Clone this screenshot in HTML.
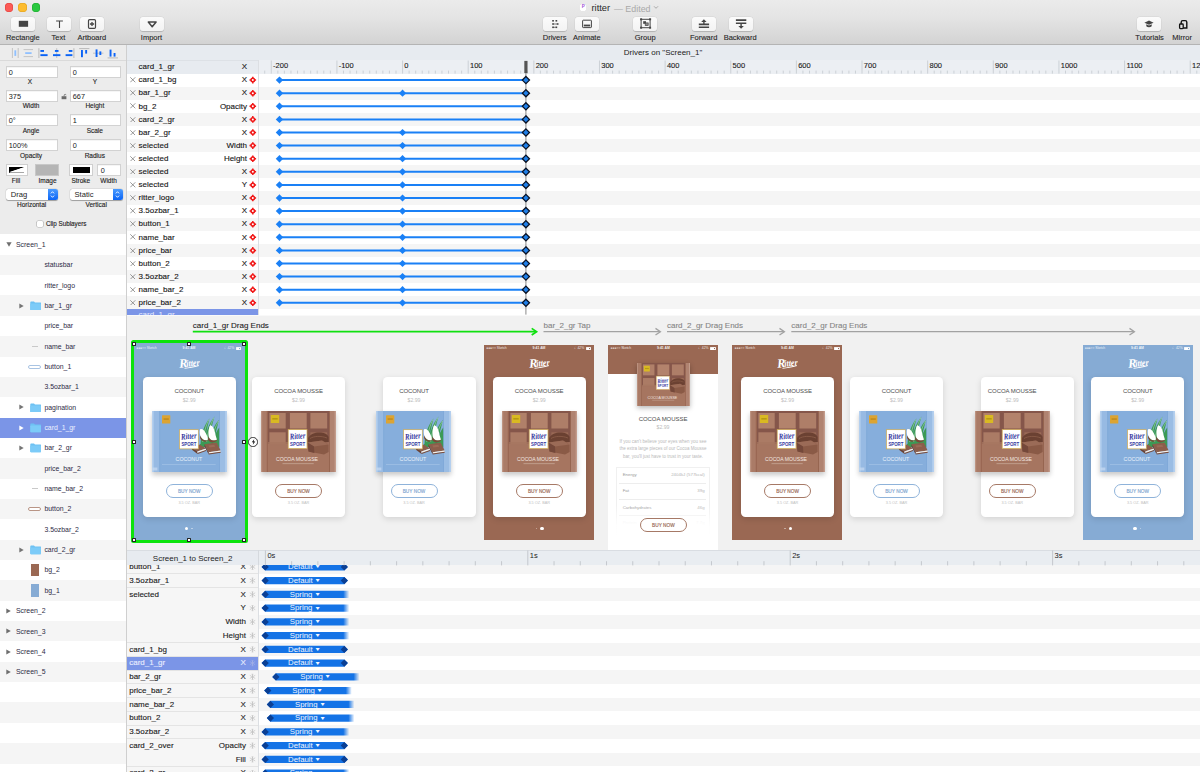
<!DOCTYPE html><html><head><meta charset="utf-8"><title>ritter</title><style>
*{box-sizing:border-box;margin:0;padding:0}
html,body{width:1200px;height:772px;overflow:hidden;background:#f1f1f1;font-family:"Liberation Sans",sans-serif;color:#222}
.a{position:absolute}
.t{position:absolute;white-space:nowrap;line-height:1}
.c{transform:translate(-50%,-50%)}
.r{transform:translate(-100%,-50%)}
.l{transform:translate(0,-50%)}
#tb{left:0;top:0;width:1200px;height:45px;background:linear-gradient(#ebebeb,#e4e4e4 40%,#d3d3d3);border-bottom:1px solid #b4b4b4}
.btn{position:absolute;top:17px;height:14px;width:24px;border-radius:3px;background:linear-gradient(#fbfbfb,#f3f3f3);box-shadow:0 .5px .8px rgba(0,0,0,.16),0 0 0 .4px rgba(0,0,0,.05)}
.btn svg{position:absolute;left:0;top:0;width:24px;height:14px}
.tl{font-size:7.5px;color:#262626;top:37.5px;-webkit-text-stroke:.1px #262626}
#lp{left:0;top:45px;width:127px;height:727px;background:#ececec;border-right:1px solid #cfcfcf}
.inp{position:absolute;height:12px;background:#fff;border:1px solid #d2d2d2;box-shadow:inset 0 .5px .5px rgba(0,0,0,.08);font-size:7.3px;line-height:11.4px;padding-left:2.3px;color:#222}
.lb{font-size:6.5px;color:#222;-webkit-text-stroke:.12px #222}
._dd{}.dd{position:absolute;height:11px;background:#fff;border-radius:2.5px;box-shadow:0 .4px .8px rgba(0,0,0,.3),0 0 0 .4px rgba(0,0,0,.08);font-size:7.6px;line-height:11.2px;padding-left:5px;color:#222}
.dd i{position:absolute;right:0;top:0;width:9.5px;height:11px;border-radius:0 2.5px 2.5px 0;background:linear-gradient(#4a9bff,#0b64f5)}
.lr{position:absolute;left:0;width:126px;height:20.4px}
._lt{}.lt{font-size:6.9px;color:#2d2b45}
.row{position:absolute;left:127px;width:1073px}
.dn{font-size:8px;color:#161616;-webkit-text-stroke:.12px #161616}
</style></head><body>
<svg width="0" height="0" style="position:absolute"><defs>
<linearGradient id="gfl" x1="0" x2="1"><stop offset="0" stop-color="#a9c6e8"/><stop offset="1" stop-color="#8bb1de"/></linearGradient>
<linearGradient id="gbr" x1="0" x2="0" y1="0" y2="1"><stop offset="0" stop-color="#a97763"/><stop offset="1" stop-color="#99644f"/></linearGradient>
<symbol id="coco" viewBox="0 0 75 61">
 <rect x="0" y="0" width="75" height="61" fill="#86aedc"/>
 <rect x="0" y="0" width="8" height="61" fill="#97bae3"/>
 <rect x="0" y="0" width="1.6" height="61" fill="#b4cfee"/>
 <rect x="7.2" y="0" width="1" height="61" fill="#7ea8d8"/>
 <rect x="67.4" y="0" width="7.6" height="61" fill="#9bbde4"/>
 <rect x="73.2" y="0" width="1.8" height="61" fill="#b4cfee"/>
 <rect x="67" y="0" width=".9" height="61" fill="#7ea8d8"/>
 <g fill="#3b9a55">
  <path d="M48.5 33 C49 24 52 14 57.5 7.5 C55.5 15 53.5 24 53 33 Z"/>
  <path d="M52 33 C53 23 57 12 62.5 5.5 C60 14 57.5 24 57 33 Z"/>
  <path d="M56 33 C58 24 62 14 67 9 C65 17 62.5 25 61.5 33 Z"/>
  <path d="M59.5 33 C61.5 27 64.5 20 67.2 16.5 L67.2 33 Z"/>
  <path d="M48 33 H67.2 V36 H48 Z"/>
 </g>
 <g stroke="#d8efe0" stroke-width=".45" fill="none"><path d="M50.8 31 C51.5 23 54 14 57 8.5"/><path d="M54.6 31 C55.6 22 58.8 12.5 62 6.5"/><path d="M58.9 31 C60.4 23.5 63.4 15.5 66.6 10"/></g>
 <path d="M48.2 18.2 C50.2 17.2 52.5 19.5 54 22.5 C55.3 25.2 56.3 27.6 55.6 28.9 C53 30.2 49.6 28.2 48.4 25 C47.6 22.6 47.5 19.6 48.2 18.2 Z" fill="#fff"/>
 <path d="M48 24.5 C49.5 28.5 53 30.6 56 29 C55 31.5 50 31.5 48 27 Z" fill="#7a4b38"/>
 <path d="M58.3 14.2 C60.6 14.2 62.3 18 63 21.6 C63.7 25 64.6 27.6 65 28.9 C62 30.4 57.4 29.6 56.8 26 C56.3 22 56.6 16 58.3 14.2 Z" fill="#fff"/>
 <path d="M56.6 25.5 C57.5 29 61.5 30.6 65.2 28.6 C65.4 31 58 33.6 56 28.6 Z" fill="#7a4b38"/>
 <rect x="10" y="4.2" width="8.3" height="8.4" rx=".6" fill="#dca433"/>
 <rect x="11.6" y="7.3" width="5.2" height="1.5" fill="#c08a1c"/>
 <path d="M39.8 36.4 L47.8 33.4 L53.9 37.6 L45.4 40.6 Z" fill="#8c5e4b"/><path d="M39.8 36.4 L45.4 40.6 L45.6 43 L40 38.8 Z" fill="#6b4131"/><path d="M45.4 40.6 L53.9 37.6 L54 38.9 L45.5 41.9 Z" fill="#f5f0ea"/><path d="M45.5 41.9 L54 38.9 L54 40 L45.6 43 Z" fill="#7a4b38"/>
 <path d="M52.4 33.2 L64.6 31.6 L68.6 39.4 L56.6 41.2 Z" fill="#8c5e4b"/><path d="M56.3 34.6 L62.2 33.8 L63.2 35.8 L57.3 36.6 Z" fill="#9a6b57"/><path d="M56.6 41.2 L68.6 39.4 L68.7 40.8 L56.7 42.6 Z" fill="#f5f0ea"/><path d="M56.7 42.6 L68.7 40.8 L68.7 41.8 L56.8 43.6 Z" fill="#7a4b38"/><path d="M52.4 33.2 L56.6 41.2 L56.8 43.6 L52.5 35.4 Z" fill="#6b4131"/>
 <rect x="27.5" y="18.7" width="18.8" height="19.2" fill="#fff" stroke="#cfa94f" stroke-width=".7"/>
 <text x="36.9" y="28" font-family="Liberation Serif" font-style="italic" font-weight="bold" font-size="8.6" fill="#3437a0" text-anchor="middle" textLength="15.6" lengthAdjust="spacingAndGlyphs" transform="rotate(-5 36.9 26)">Ritter</text>
 <text x="36.9" y="34.6" font-family="Liberation Sans" font-weight="bold" font-size="5.4" fill="#3437a0" text-anchor="middle" textLength="15" lengthAdjust="spacingAndGlyphs">SPORT</text>
 <text x="36.9" y="50.4" font-family="Liberation Sans" font-size="5.4" fill="#eaf2fb" text-anchor="middle" textLength="26.6" lengthAdjust="spacingAndGlyphs">COCONUT</text>
 <rect x="10" y="53" width="53.7" height=".8" fill="#9fc0e5"/>
 <rect x=".4" y="56.5" width="5" height="3" fill="#c7dbf2" opacity=".7"/>
</symbol>
<symbol id="cocoa" viewBox="0 0 75 61">
 <rect x="0" y="0" width="75" height="61" fill="#a67560"/>
 <rect x="6.5" y="0" width="62" height="33" fill="#85564a"/>
 <rect x="8.4" y="2" width="16.3" height="15.5" fill="#b08069"/>
 <rect x="28.9" y="2" width="16.8" height="15.5" fill="#b3836c"/>
 <rect x="49.4" y="2" width="16.8" height="15.5" fill="#ae7e68"/>
 <rect x="8.4" y="21.3" width="16.3" height="12" fill="#ab7b65"/>
 <rect x="49.4" y="21.3" width="16.8" height="12" fill="#9a6a56"/>
 <rect x="6.5" y="31" width="62" height="3.5" fill="#a67560" opacity=".75"/>
 <rect x="0" y="0" width="6.5" height="61" fill="#aa7b67"/>
 <rect x="0" y="0" width="1.2" height="61" fill="#bd9482"/>
 <rect x="5.8" y="0" width=".9" height="61" fill="#94624e"/>
 <rect x="68.5" y="0" width="6.5" height="61" fill="#b08371"/>
 <rect x="73.6" y="0" width="1.4" height="61" fill="#c39c8c"/>
 <rect x="68.1" y="0" width=".9" height="61" fill="#94624e"/>
 <path d="M47 27 C50 22.5 55 21 60 21.6 C64 22 67 24 67.6 26 L67.6 31 L47 33 Z" fill="#6b4132"/>
 <path d="M49 27.5 C53 25 60 24.6 66 27" stroke="#8d5e4a" stroke-width=".8" fill="none"/>
 <path d="M46.5 31.5 L61 29.5 L67.6 33.5 L67.6 41 L63 43.6 L47.5 40.5 Z" fill="#8a5a46"/>
 <path d="M46.5 31.5 L61 29.5 L67.6 33.5 L53 35.4 Z" fill="#9b6b57"/>
 <path d="M46.5 31.5 L53 35.4 L53.4 42 L47.5 40.5 Z" fill="#74483a"/>
 <rect x="9.8" y="4" width="8.4" height="8" rx=".6" fill="#d9b922"/>
 <rect x="11.3" y="7" width="5.4" height="1.6" fill="#b79a14"/>
 <rect x="27.2" y="18.6" width="18.8" height="19" fill="#fff" stroke="#cfa94f" stroke-width=".7"/>
 <text x="36.6" y="27.9" font-family="Liberation Serif" font-style="italic" font-weight="bold" font-size="8.6" fill="#3437a0" text-anchor="middle" textLength="15.6" lengthAdjust="spacingAndGlyphs" transform="rotate(-5 36.6 26)">Ritter</text>
 <text x="36.6" y="34.5" font-family="Liberation Sans" font-weight="bold" font-size="5.4" fill="#3437a0" text-anchor="middle" textLength="15" lengthAdjust="spacingAndGlyphs">SPORT</text>
 <text x="36" y="50.4" font-family="Liberation Sans" font-size="5.4" fill="#f3e8e2" text-anchor="middle" textLength="42" lengthAdjust="spacingAndGlyphs">COCOA MOUSSE</text>
 <rect x="21.5" y="52.3" width="31.2" height=".8" fill="#c6a595"/>
</symbol>
<symbol id="rlogo" viewBox="0 0 22 12">
 <g transform="rotate(-5 11 6)"><text x="1" y="10" font-family="Liberation Serif" font-style="italic" font-weight="bold" fill="#fff"><tspan font-size="12.5">R</tspan><tspan font-size="9.4" dx="-1.2" dy="-.6" textLength="13.4" lengthAdjust="spacingAndGlyphs">itter</tspan></text></g>
 <path d="M6.5 11 C11 10.6 16 9.4 21 8.3 L21 9.1 C16 10.4 11 11.5 6.5 11.8 Z" fill="#fff"/>
</symbol>
</defs></svg>
<div id="tb" class="a">
<div class="a" style="left:5.1px;top:3.4px;width:8.2px;height:8.2px;border-radius:50%;background:#fc5b57;box-shadow:inset 0 0 0 .5px #df3d38"></div>
<div class="a" style="left:18.4px;top:3.4px;width:8.2px;height:8.2px;border-radius:50%;background:#fdbc2e;box-shadow:inset 0 0 0 .5px #de9f1a"></div>
<div class="a" style="left:31.699999999999996px;top:3.4px;width:8.2px;height:8.2px;border-radius:50%;background:#29c83f;box-shadow:inset 0 0 0 .5px #1aa82c"></div>
<div class="a" style="left:580.3px;top:4.2px;width:6.2px;height:7.2px;background:#fff;border-radius:.8px;box-shadow:0 0 .6px rgba(0,0,0,.5)"></div>
<div class="t" style="left:581.7px;top:5.3px;font-size:4.5px;font-weight:bold;color:#a04fd6">P</div>
<div class="t l" style="left:591.5px;top:9.1px;font-size:9.3px;color:#2a2a2a">ritter</div>
<div class="t l" style="left:614px;top:9.1px;font-size:8.9px;color:#a9a9a9">— Edited</div>
<svg class="a" style="left:653px;top:4.8px" width="6" height="5" viewBox="0 0 6 5"><path d="M1 1.3 L3 3.3 L5 1.3" fill="none" stroke="#a9a9a9" stroke-width="1"/></svg>
<div class="btn" style="left:11px"><svg viewBox="0 0 24 14"><rect x="7.8" y="3.8" width="9.3" height="6" fill="#454545"/></svg></div>
<div class="t c tl" style="left:22.8px">Rectangle</div>
<div class="btn" style="left:46.5px"><svg viewBox="0 0 24 14"><path d="M9.1 3.4 H15.9 V4.5 H13.05 V11 H11.95 V4.5 H9.1 Z" fill="#454545"/></svg></div>
<div class="t c tl" style="left:58.5px">Text</div>
<div class="btn" style="left:80.2px"><svg viewBox="0 0 24 14"><rect x="8.5" y="2.6" width="7" height="8.8" rx="1.1" fill="none" stroke="#454545" stroke-width="1.2"/><path d="M12 4.9 V9.1 M9.9 7 H14.1" stroke="#454545" stroke-width="1.3"/></svg></div>
<div class="t c tl" style="left:91.8px">Artboard</div>
<div class="btn" style="left:139.7px"><svg viewBox="0 0 24 14"><path d="M8.3 5 H16.1 L12.2 9.8 Z" fill="none" stroke="#454545" stroke-width="1.5" stroke-linejoin="round"/></svg></div>
<div class="t c tl" style="left:151.5px">Import</div>
<div class="btn" style="left:542.8px"><svg viewBox="0 0 24 14"><rect x="9.2" y="3" width="1.7" height="1.6" fill="#454545"/><rect x="9.2" y="6.2" width="1.7" height="1.6" fill="#454545"/><rect x="9.2" y="9.5" width="1.7" height="1.6" fill="#454545"/><rect x="12.5" y="3" width="1.7" height="1.6" fill="#454545"/><rect x="13.8" y="6.2" width="1.7" height="1.6" fill="#454545"/><rect x="12.5" y="9.5" width="1.7" height="1.6" fill="#454545"/><path d="M10.5 7 H14 M10.5 10.3 H12.6" stroke="#454545" stroke-width=".7"/></svg></div>
<div class="t c tl" style="left:554.6px">Drivers</div>
<div class="btn" style="left:574.8px"><svg viewBox="0 0 24 14"><rect x="7.6" y="3.2" width="8.8" height="7.4" rx=".6" fill="none" stroke="#454545" stroke-width="1"/><rect x="8.8" y="7.6" width="6.4" height="1.8" fill="#454545"/></svg></div>
<div class="t c tl" style="left:586.8px">Animate</div>
<div class="btn" style="left:633.1px"><svg viewBox="0 0 24 14"><rect x="8.1" y="2.3" width="9" height="8.4" fill="none" stroke="#454545" stroke-width="1"/><rect x="7.1" y="1.3" width="2" height="2" fill="#454545"/><rect x="16.1" y="1.3" width="2" height="2" fill="#454545"/><rect x="7.1" y="9.7" width="2" height="2" fill="#454545"/><rect x="16.1" y="9.7" width="2" height="2" fill="#454545"/><rect x="10.2" y="4.2" width="2.8" height="2.6" fill="#454545"/><rect x="12.2" y="5.9" width="3" height="2.7" fill="#8a8a8a" stroke="#454545" stroke-width=".7"/></svg></div>
<div class="t c tl" style="left:645.2px">Group</div>
<div class="btn" style="left:692.2px"><svg viewBox="0 0 24 14"><path d="M11.9 2.3 L14.6 5.1 H9.2 Z" fill="#454545"/><path d="M11.9 4.9 V7.6" stroke="#454545" stroke-width="1.4"/><path d="M6.8 7.4 H17.1 M6.8 10.3 H17.1" stroke="#454545" stroke-width="1.6"/></svg></div>
<div class="t c tl" style="left:703.7px">Forward</div>
<div class="btn" style="left:728.6px"><svg viewBox="0 0 24 14"><path d="M6.9 3.1 H17.3 M6.9 6.2 H17.3" stroke="#454545" stroke-width="1.6"/><path d="M12.1 6.4 V9.4" stroke="#454545" stroke-width="1.4"/><path d="M12.1 11.8 L14.8 9 H9.4 Z" fill="#454545"/></svg></div>
<div class="t c tl" style="left:740.1px">Backward</div>
<div class="btn" style="left:1137.1px"><svg viewBox="0 0 24 14"><path d="M12 3.6 L16.6 5.7 L12 7.8 L7.4 5.7 Z" fill="#454545"/><path d="M9.3 7.2 V9.2 C10.6 10.6 13.4 10.6 14.7 9.2 V7.2 L12 8.5 Z" fill="#454545"/></svg></div>
<div class="t c tl" style="left:1149.6px">Tutorials</div>
<div class="a" style="left:1170.6px;top:17px;width:24px;height:14px"><svg width="24" height="14" viewBox="0 0 24 14"><path d="M10.2 11 V5.2 C10.2 4.2 10.8 3.6 11.8 3.6 H14.2 C15.2 3.6 15.8 4.2 15.8 5.2 V11 Z" fill="none" stroke="#111" stroke-width="1.4"/><rect x="8.6" y="7" width="3.6" height="4.6" rx=".8" fill="#e0e0e0" stroke="#111" stroke-width="1.3"/></svg></div>
<div class="t c tl" style="left:1182.1px">Mirror</div>
</div>
<div id="lp" class="a"></div>
<div class="a" style="left:0;top:60px;width:126px;height:1px;background:#dadada"></div>
<svg class="a" style="left:0;top:0" width="127" height="62" viewBox="0 0 127 62"><path d="M12.4 48 V58 M18.2 48 V58" stroke="#b9b9b9" stroke-width=".8"/><rect x="14.4" y="50.3" width="1.8" height="5.6" fill="#8fc0ff"/><path d="M23.6 49.6 H33 M23.6 56.6 H33" stroke="#b9b9b9" stroke-width=".8"/><rect x="25.2" y="52.2" width="6.4" height="1.8" fill="#8fc0ff"/><path d="M38.9 48.2 V58" stroke="#b9b9b9" stroke-width="1"/><rect x="40.4" y="50" width="3.6" height="1.9" fill="#0b63f6"/><rect x="40.4" y="54.2" width="7.2" height="1.9" fill="#0b63f6"/><path d="M56.7 48.2 V58" stroke="#b9b9b9" stroke-width=".8"/><rect x="54.9" y="50" width="3.6" height="1.9" fill="#0b63f6"/><rect x="53" y="54.2" width="7.4" height="1.9" fill="#0b63f6"/><path d="M73.9 48.2 V58" stroke="#b9b9b9" stroke-width="1"/><rect x="68.8" y="50" width="3.6" height="1.9" fill="#0b63f6"/><rect x="65.6" y="54.2" width="6.8" height="1.9" fill="#0b63f6"/><path d="M79.2 48.6 H89.4" stroke="#b9b9b9" stroke-width="1"/><rect x="81" y="50" width="1.9" height="7.2" fill="#0b63f6"/><rect x="85.2" y="50" width="1.9" height="3.6" fill="#0b63f6"/><path d="M93 53.2 H103.4" stroke="#b9b9b9" stroke-width=".8"/><rect x="95.6" y="49.4" width="1.9" height="7.6" fill="#0b63f6"/><rect x="99.4" y="51.4" width="1.9" height="3.6" fill="#0b63f6"/><path d="M107.6 57.9 H118" stroke="#b9b9b9" stroke-width="1"/><rect x="109.6" y="49.6" width="1.9" height="7" fill="#0b63f6"/><rect x="113.6" y="53" width="1.9" height="3.6" fill="#0b63f6"/></svg>
<div class="inp" style="left:5.5px;top:66px;width:52px">0</div>
<div class="inp" style="left:69.5px;top:66px;width:51.5px">0</div>
<div class="t c lb" style="left:29.8px;top:82.3px">X</div>
<div class="t c lb" style="left:94.8px;top:82.3px">Y</div>
<div class="inp" style="left:5.5px;top:89.8px;width:52px">375</div>
<div class="inp" style="left:69.5px;top:89.8px;width:51.5px">667</div>
<div class="t c lb" style="left:31px;top:106px">Width</div>
<div class="t c lb" style="left:94.8px;top:106px">Height</div>
<div class="inp" style="left:5.5px;top:114.4px;width:52px">0°</div>
<div class="inp" style="left:69.5px;top:114.4px;width:51.5px">1</div>
<div class="t c lb" style="left:31px;top:130.8px">Angle</div>
<div class="t c lb" style="left:94.8px;top:130.8px">Scale</div>
<div class="inp" style="left:5.5px;top:139.2px;width:52px">100%</div>
<div class="inp" style="left:69.5px;top:139.2px;width:51.5px">0</div>
<div class="t c lb" style="left:31px;top:156px">Opacity</div>
<div class="t c lb" style="left:94.8px;top:156px">Radius</div>
<svg class="a" style="left:60.5px;top:92.5px" width="6" height="7" viewBox="0 0 6 7"><rect x=".6" y="3.2" width="4.8" height="3" fill="#6b6b6b"/><path d="M3.2 3.2 V2.2 C3.2 1 5 1 5 2.2" fill="none" stroke="#6b6b6b" stroke-width=".8"/></svg>
<div class="a" style="left:5.5px;top:164px;width:22.3px;height:12px;background:#fff;border:1px solid #cfcfcf"></div>
<svg class="a" style="left:9.2px;top:167.4px" width="15" height="5.4" viewBox="0 0 15 5.4"><rect x="0" y="0" width="15" height="5.4" fill="#fff" stroke="#222" stroke-width=".8"/><path d="M0 0 H2 L15 0 L0 5.4 Z" fill="#000" transform="scale(1,1)"/><path d="M0 5.4 L15 0 V5.4 Z" fill="#fff"/><path d="M0 0 L15 0 L0 5.4Z" fill="#000"/><path d="M.4 5 L14.6 .4 V5 Z" fill="#fff"/></svg>
<div class="a" style="left:35.3px;top:164px;width:23.7px;height:12px;background:#b5b5b5;border:1.5px solid #c8c8c8"></div>
<div class="a" style="left:69.2px;top:164px;width:23.5px;height:12px;background:#fff;border:1px solid #cfcfcf"></div>
<div class="a" style="left:73px;top:167.3px;width:16.5px;height:5.4px;background:#000"></div>
<div class="inp" style="left:97.4px;top:164px;width:23.2px">0</div>
<div class="t c lb" style="left:16px;top:181px">Fill</div>
<div class="t c lb" style="left:47.5px;top:181px">Image</div>
<div class="t c lb" style="left:80.8px;top:181px">Stroke</div>
<div class="t c lb" style="left:108.6px;top:181px">Width</div>
<div class="dd" style="left:5.7px;top:189.2px;width:52.3px">Drag<i></i></div>
<div class="dd" style="left:69.5px;top:189.2px;width:53.4px">Static<i></i></div>
<svg class="a" style="left:50.4px;top:190.4px" width="5" height="9" viewBox="0 0 5 9"><path d="M.9 3.4 L2.5 1.7 L4.1 3.4 M.9 5.6 L2.5 7.3 L4.1 5.6" fill="none" stroke="#fff" stroke-width=".9"/></svg>
<svg class="a" style="left:115.3px;top:190.4px" width="5" height="9" viewBox="0 0 5 9"><path d="M.9 3.4 L2.5 1.7 L4.1 3.4 M.9 5.6 L2.5 7.3 L4.1 5.6" fill="none" stroke="#fff" stroke-width=".9"/></svg>
<div class="t c lb" style="left:31.6px;top:205.3px">Horizontal</div>
<div class="t c lb" style="left:96.2px;top:205.3px">Vertical</div>
<div class="a" style="left:37.4px;top:221.1px;width:5.8px;height:5.8px;background:#fff;border-radius:1.2px;box-shadow:0 0 0 .6px #b0b0b0"></div>
<div class="t l lb" style="left:45.9px;top:224.3px;font-size:6.3px">Clip Sublayers</div>
<div class="lr" style="top:234.40px;background:#ffffff"></div>
<svg class="a" style="left:5.5px;top:241.98px" width="6" height="5" viewBox="0 0 6 5"><path d="M.4 .3 H5.6 L3 4.8 Z" fill="#6e6e6e"/></svg>
<div class="t l lt" style="left:16px;top:244.88px">Screen_1</div>
<div class="lr" style="top:254.75px;background:#f5f5f5"></div>
<div class="t l lt" style="left:44.4px;top:265.23px;color:#2d2b45">statusbar</div>
<div class="lr" style="top:275.10px;background:#ffffff"></div>
<div class="t l lt" style="left:44.4px;top:285.58px;color:#2d2b45">ritter_logo</div>
<div class="lr" style="top:295.45px;background:#f5f5f5"></div>
<svg class="a" style="left:19.4px;top:302.62px" width="5" height="6" viewBox="0 0 5 6"><path d="M.3 .4 V5.6 L4.7 3 Z" fill="#757575"/></svg>
<svg class="a" style="left:29.6px;top:300.82px" width="11.4" height="9.6" viewBox="0 0 11.4 9.6"><path d="M.3 1.2 C.3 .7 .6 .4 1.1 .4 H4 L5 1.5 H10.3 C10.8 1.5 11.1 1.8 11.1 2.3 V8.4 C11.1 8.9 10.8 9.2 10.3 9.2 H1.1 C.6 9.2 .3 8.9 .3 8.4 Z" fill="#6dc1f3"/><rect x=".3" y="2.6" width="10.8" height="6.6" rx=".7" fill="#7ccbf8"/></svg>
<div class="t l lt" style="left:44.4px;top:305.93px;color:#2d2b45">bar_1_gr</div>
<div class="lr" style="top:315.80px;background:#ffffff"></div>
<div class="t l lt" style="left:44.4px;top:326.28px;color:#2d2b45">price_bar</div>
<div class="lr" style="top:336.15px;background:#f5f5f5"></div>
<div class="a" style="left:32px;top:346.02px;width:6px;height:.8px;background:#c9c9c9"></div>
<div class="t l lt" style="left:44.4px;top:346.62px;color:#2d2b45">name_bar</div>
<div class="lr" style="top:356.50px;background:#ffffff"></div>
<div class="a" style="left:28.2px;top:364.57px;width:13.2px;height:4.2px;border-radius:2.1px;border:.8px solid #a9c4e3;background:#fff"></div>
<div class="t l lt" style="left:44.4px;top:366.98px;color:#2d2b45">button_1</div>
<div class="lr" style="top:376.85px;background:#f5f5f5"></div>
<div class="t l lt" style="left:44.4px;top:387.33px;color:#2d2b45">3.5ozbar_1</div>
<div class="lr" style="top:397.20px;background:#ffffff"></div>
<svg class="a" style="left:19.4px;top:404.38px" width="5" height="6" viewBox="0 0 5 6"><path d="M.3 .4 V5.6 L4.7 3 Z" fill="#757575"/></svg>
<svg class="a" style="left:29.6px;top:402.58px" width="11.4" height="9.6" viewBox="0 0 11.4 9.6"><path d="M.3 1.2 C.3 .7 .6 .4 1.1 .4 H4 L5 1.5 H10.3 C10.8 1.5 11.1 1.8 11.1 2.3 V8.4 C11.1 8.9 10.8 9.2 10.3 9.2 H1.1 C.6 9.2 .3 8.9 .3 8.4 Z" fill="#6dc1f3"/><rect x=".3" y="2.6" width="10.8" height="6.6" rx=".7" fill="#7ccbf8"/></svg>
<div class="t l lt" style="left:44.4px;top:407.68px;color:#2d2b45">pagination</div>
<div class="lr" style="top:417.55px;background:#7b95e7"></div>
<svg class="a" style="left:19.4px;top:424.73px" width="5" height="6" viewBox="0 0 5 6"><path d="M.3 .4 V5.6 L4.7 3 Z" fill="#fff"/></svg>
<svg class="a" style="left:29.6px;top:422.93px" width="11.4" height="9.6" viewBox="0 0 11.4 9.6"><path d="M.3 1.2 C.3 .7 .6 .4 1.1 .4 H4 L5 1.5 H10.3 C10.8 1.5 11.1 1.8 11.1 2.3 V8.4 C11.1 8.9 10.8 9.2 10.3 9.2 H1.1 C.6 9.2 .3 8.9 .3 8.4 Z" fill="#6dc1f3"/><rect x=".3" y="2.6" width="10.8" height="6.6" rx=".7" fill="#7ccbf8"/></svg>
<div class="t l lt" style="left:44.4px;top:428.03px;color:#eef1ff">card_1_gr</div>
<div class="lr" style="top:437.90px;background:#ffffff"></div>
<svg class="a" style="left:19.4px;top:445.07px" width="5" height="6" viewBox="0 0 5 6"><path d="M.3 .4 V5.6 L4.7 3 Z" fill="#757575"/></svg>
<svg class="a" style="left:29.6px;top:443.27px" width="11.4" height="9.6" viewBox="0 0 11.4 9.6"><path d="M.3 1.2 C.3 .7 .6 .4 1.1 .4 H4 L5 1.5 H10.3 C10.8 1.5 11.1 1.8 11.1 2.3 V8.4 C11.1 8.9 10.8 9.2 10.3 9.2 H1.1 C.6 9.2 .3 8.9 .3 8.4 Z" fill="#6dc1f3"/><rect x=".3" y="2.6" width="10.8" height="6.6" rx=".7" fill="#7ccbf8"/></svg>
<div class="t l lt" style="left:44.4px;top:448.38px;color:#2d2b45">bar_2_gr</div>
<div class="lr" style="top:458.25px;background:#f5f5f5"></div>
<div class="t l lt" style="left:44.4px;top:468.73px;color:#2d2b45">price_bar_2</div>
<div class="lr" style="top:478.60px;background:#ffffff"></div>
<div class="a" style="left:32px;top:488.48px;width:6px;height:.8px;background:#c9c9c9"></div>
<div class="t l lt" style="left:44.4px;top:489.08px;color:#2d2b45">name_bar_2</div>
<div class="lr" style="top:498.95px;background:#f5f5f5"></div>
<div class="a" style="left:28.2px;top:507.03px;width:13.2px;height:4.2px;border-radius:2.1px;border:.8px solid #b99586;background:#fff"></div>
<div class="t l lt" style="left:44.4px;top:509.43px;color:#2d2b45">button_2</div>
<div class="lr" style="top:519.30px;background:#ffffff"></div>
<div class="t l lt" style="left:44.4px;top:529.77px;color:#2d2b45">3.5ozbar_2</div>
<div class="lr" style="top:539.65px;background:#f5f5f5"></div>
<svg class="a" style="left:19.4px;top:546.82px" width="5" height="6" viewBox="0 0 5 6"><path d="M.3 .4 V5.6 L4.7 3 Z" fill="#757575"/></svg>
<svg class="a" style="left:29.6px;top:545.02px" width="11.4" height="9.6" viewBox="0 0 11.4 9.6"><path d="M.3 1.2 C.3 .7 .6 .4 1.1 .4 H4 L5 1.5 H10.3 C10.8 1.5 11.1 1.8 11.1 2.3 V8.4 C11.1 8.9 10.8 9.2 10.3 9.2 H1.1 C.6 9.2 .3 8.9 .3 8.4 Z" fill="#6dc1f3"/><rect x=".3" y="2.6" width="10.8" height="6.6" rx=".7" fill="#7ccbf8"/></svg>
<div class="t l lt" style="left:44.4px;top:550.12px;color:#2d2b45">card_2_gr</div>
<div class="lr" style="top:560.00px;background:#ffffff"></div>
<div class="a" style="left:31px;top:563.88px;width:7.8px;height:12.6px;background:#9a6853"></div>
<div class="t l lt" style="left:44.4px;top:570.47px;color:#2d2b45">bg_2</div>
<div class="lr" style="top:580.35px;background:#f5f5f5"></div>
<div class="a" style="left:31px;top:584.23px;width:7.8px;height:12.6px;background:#86abd4"></div>
<div class="t l lt" style="left:44.4px;top:590.82px;color:#2d2b45">bg_1</div>
<div class="lr" style="top:600.70px;background:#ffffff"></div>
<svg class="a" style="left:6.2px;top:607.88px" width="5" height="6" viewBox="0 0 5 6"><path d="M.3 .4 V5.6 L4.8 3 Z" fill="#6e6e6e"/></svg>
<div class="t l lt" style="left:16px;top:611.17px">Screen_2</div>
<div class="lr" style="top:621.05px;background:#f5f5f5"></div>
<svg class="a" style="left:6.2px;top:628.23px" width="5" height="6" viewBox="0 0 5 6"><path d="M.3 .4 V5.6 L4.8 3 Z" fill="#6e6e6e"/></svg>
<div class="t l lt" style="left:16px;top:631.52px">Screen_3</div>
<div class="lr" style="top:641.40px;background:#ffffff"></div>
<svg class="a" style="left:6.2px;top:648.57px" width="5" height="6" viewBox="0 0 5 6"><path d="M.3 .4 V5.6 L4.8 3 Z" fill="#6e6e6e"/></svg>
<div class="t l lt" style="left:16px;top:651.87px">Screen_4</div>
<div class="lr" style="top:661.75px;background:#f5f5f5"></div>
<svg class="a" style="left:6.2px;top:668.92px" width="5" height="6" viewBox="0 0 5 6"><path d="M.3 .4 V5.6 L4.8 3 Z" fill="#6e6e6e"/></svg>
<div class="t l lt" style="left:16px;top:672.22px">Screen_5</div>
<div class="lr" style="top:682.10px;background:#ffffff"></div>
<div class="lr" style="top:702.45px;background:#f5f5f5"></div>
<div class="lr" style="top:722.80px;background:#ffffff"></div>
<div class="lr" style="top:743.15px;background:#f5f5f5"></div>
<div class="lr" style="top:763.50px;background:#ffffff"></div>
<div class="a" style="left:127px;top:45px;width:1073px;height:29px;background:#e7ebf0"></div>
<div class="a" style="left:127px;top:60px;width:1073px;height:.6px;background:#dde1e6"></div>
<div class="t c" style="left:663px;top:52.7px;font-size:8px;color:#222">Drivers on "Screen_1"</div>
<div class="a" style="left:258.3px;top:60.3px;width:941.7px;height:13.4px;background:#eceff3"></div>
<div class="t l dn" style="left:138.6px;top:67px">card_1_gr</div>
<div class="t r dn" style="left:247px;top:67px">X</div>
<div class="row" style="top:73.55px;height:13.20px;background:#ffffff"></div>
<svg class="a" style="left:130px;top:77.20px" width="5.6" height="5.6" viewBox="0 0 5.6 5.6"><path d="M.3 .3 L5.3 5.3 M5.3 .3 L.3 5.3" stroke="#6f6f6f" stroke-width=".7"/></svg>
<div class="t l dn" style="left:138.6px;top:80.30px">card_1_bg</div>
<div class="t r dn" style="left:247px;top:80.30px">X</div>
<div class="row" style="top:86.65px;height:13.20px;background:#f5f5f5"></div>
<svg class="a" style="left:130px;top:90.30px" width="5.6" height="5.6" viewBox="0 0 5.6 5.6"><path d="M.3 .3 L5.3 5.3 M5.3 .3 L.3 5.3" stroke="#6f6f6f" stroke-width=".7"/></svg>
<div class="t l dn" style="left:138.6px;top:93.40px">bar_1_gr</div>
<div class="t r dn" style="left:247px;top:93.40px">X</div>
<div class="row" style="top:99.75px;height:13.20px;background:#ffffff"></div>
<svg class="a" style="left:130px;top:103.40px" width="5.6" height="5.6" viewBox="0 0 5.6 5.6"><path d="M.3 .3 L5.3 5.3 M5.3 .3 L.3 5.3" stroke="#6f6f6f" stroke-width=".7"/></svg>
<div class="t l dn" style="left:138.6px;top:106.50px">bg_2</div>
<div class="t r dn" style="left:247px;top:106.50px">Opacity</div>
<div class="row" style="top:112.85px;height:13.20px;background:#f5f5f5"></div>
<svg class="a" style="left:130px;top:116.50px" width="5.6" height="5.6" viewBox="0 0 5.6 5.6"><path d="M.3 .3 L5.3 5.3 M5.3 .3 L.3 5.3" stroke="#6f6f6f" stroke-width=".7"/></svg>
<div class="t l dn" style="left:138.6px;top:119.60px">card_2_gr</div>
<div class="t r dn" style="left:247px;top:119.60px">X</div>
<div class="row" style="top:125.95px;height:13.20px;background:#ffffff"></div>
<svg class="a" style="left:130px;top:129.60px" width="5.6" height="5.6" viewBox="0 0 5.6 5.6"><path d="M.3 .3 L5.3 5.3 M5.3 .3 L.3 5.3" stroke="#6f6f6f" stroke-width=".7"/></svg>
<div class="t l dn" style="left:138.6px;top:132.70px">bar_2_gr</div>
<div class="t r dn" style="left:247px;top:132.70px">X</div>
<div class="row" style="top:139.05px;height:13.20px;background:#f5f5f5"></div>
<svg class="a" style="left:130px;top:142.70px" width="5.6" height="5.6" viewBox="0 0 5.6 5.6"><path d="M.3 .3 L5.3 5.3 M5.3 .3 L.3 5.3" stroke="#6f6f6f" stroke-width=".7"/></svg>
<div class="t l dn" style="left:138.6px;top:145.80px">selected</div>
<div class="t r dn" style="left:247px;top:145.80px">Width</div>
<div class="row" style="top:152.15px;height:13.20px;background:#ffffff"></div>
<svg class="a" style="left:130px;top:155.80px" width="5.6" height="5.6" viewBox="0 0 5.6 5.6"><path d="M.3 .3 L5.3 5.3 M5.3 .3 L.3 5.3" stroke="#6f6f6f" stroke-width=".7"/></svg>
<div class="t l dn" style="left:138.6px;top:158.90px">selected</div>
<div class="t r dn" style="left:247px;top:158.90px">Height</div>
<div class="row" style="top:165.25px;height:13.20px;background:#f5f5f5"></div>
<svg class="a" style="left:130px;top:168.90px" width="5.6" height="5.6" viewBox="0 0 5.6 5.6"><path d="M.3 .3 L5.3 5.3 M5.3 .3 L.3 5.3" stroke="#6f6f6f" stroke-width=".7"/></svg>
<div class="t l dn" style="left:138.6px;top:172.00px">selected</div>
<div class="t r dn" style="left:247px;top:172.00px">X</div>
<div class="row" style="top:178.35px;height:13.20px;background:#ffffff"></div>
<svg class="a" style="left:130px;top:182.00px" width="5.6" height="5.6" viewBox="0 0 5.6 5.6"><path d="M.3 .3 L5.3 5.3 M5.3 .3 L.3 5.3" stroke="#6f6f6f" stroke-width=".7"/></svg>
<div class="t l dn" style="left:138.6px;top:185.10px">selected</div>
<div class="t r dn" style="left:247px;top:185.10px">Y</div>
<div class="row" style="top:191.45px;height:13.20px;background:#f5f5f5"></div>
<svg class="a" style="left:130px;top:195.10px" width="5.6" height="5.6" viewBox="0 0 5.6 5.6"><path d="M.3 .3 L5.3 5.3 M5.3 .3 L.3 5.3" stroke="#6f6f6f" stroke-width=".7"/></svg>
<div class="t l dn" style="left:138.6px;top:198.20px">ritter_logo</div>
<div class="t r dn" style="left:247px;top:198.20px">X</div>
<div class="row" style="top:204.55px;height:13.20px;background:#ffffff"></div>
<svg class="a" style="left:130px;top:208.20px" width="5.6" height="5.6" viewBox="0 0 5.6 5.6"><path d="M.3 .3 L5.3 5.3 M5.3 .3 L.3 5.3" stroke="#6f6f6f" stroke-width=".7"/></svg>
<div class="t l dn" style="left:138.6px;top:211.30px">3.5ozbar_1</div>
<div class="t r dn" style="left:247px;top:211.30px">X</div>
<div class="row" style="top:217.65px;height:13.20px;background:#f5f5f5"></div>
<svg class="a" style="left:130px;top:221.30px" width="5.6" height="5.6" viewBox="0 0 5.6 5.6"><path d="M.3 .3 L5.3 5.3 M5.3 .3 L.3 5.3" stroke="#6f6f6f" stroke-width=".7"/></svg>
<div class="t l dn" style="left:138.6px;top:224.40px">button_1</div>
<div class="t r dn" style="left:247px;top:224.40px">X</div>
<div class="row" style="top:230.75px;height:13.20px;background:#ffffff"></div>
<svg class="a" style="left:130px;top:234.40px" width="5.6" height="5.6" viewBox="0 0 5.6 5.6"><path d="M.3 .3 L5.3 5.3 M5.3 .3 L.3 5.3" stroke="#6f6f6f" stroke-width=".7"/></svg>
<div class="t l dn" style="left:138.6px;top:237.50px">name_bar</div>
<div class="t r dn" style="left:247px;top:237.50px">X</div>
<div class="row" style="top:243.85px;height:13.20px;background:#f5f5f5"></div>
<svg class="a" style="left:130px;top:247.50px" width="5.6" height="5.6" viewBox="0 0 5.6 5.6"><path d="M.3 .3 L5.3 5.3 M5.3 .3 L.3 5.3" stroke="#6f6f6f" stroke-width=".7"/></svg>
<div class="t l dn" style="left:138.6px;top:250.60px">price_bar</div>
<div class="t r dn" style="left:247px;top:250.60px">X</div>
<div class="row" style="top:256.95px;height:13.20px;background:#ffffff"></div>
<svg class="a" style="left:130px;top:260.60px" width="5.6" height="5.6" viewBox="0 0 5.6 5.6"><path d="M.3 .3 L5.3 5.3 M5.3 .3 L.3 5.3" stroke="#6f6f6f" stroke-width=".7"/></svg>
<div class="t l dn" style="left:138.6px;top:263.70px">button_2</div>
<div class="t r dn" style="left:247px;top:263.70px">X</div>
<div class="row" style="top:270.05px;height:13.20px;background:#f5f5f5"></div>
<svg class="a" style="left:130px;top:273.70px" width="5.6" height="5.6" viewBox="0 0 5.6 5.6"><path d="M.3 .3 L5.3 5.3 M5.3 .3 L.3 5.3" stroke="#6f6f6f" stroke-width=".7"/></svg>
<div class="t l dn" style="left:138.6px;top:276.80px">3.5ozbar_2</div>
<div class="t r dn" style="left:247px;top:276.80px">X</div>
<div class="row" style="top:283.15px;height:13.20px;background:#ffffff"></div>
<svg class="a" style="left:130px;top:286.80px" width="5.6" height="5.6" viewBox="0 0 5.6 5.6"><path d="M.3 .3 L5.3 5.3 M5.3 .3 L.3 5.3" stroke="#6f6f6f" stroke-width=".7"/></svg>
<div class="t l dn" style="left:138.6px;top:289.90px">name_bar_2</div>
<div class="t r dn" style="left:247px;top:289.90px">X</div>
<div class="row" style="top:296.25px;height:13.20px;background:#f5f5f5"></div>
<svg class="a" style="left:130px;top:299.90px" width="5.6" height="5.6" viewBox="0 0 5.6 5.6"><path d="M.3 .3 L5.3 5.3 M5.3 .3 L.3 5.3" stroke="#6f6f6f" stroke-width=".7"/></svg>
<div class="t l dn" style="left:138.6px;top:303.00px">price_bar_2</div>
<div class="t r dn" style="left:247px;top:303.00px">X</div>
<div class="a" style="left:127px;top:309.35px;width:131.3px;height:5.25px;background:#7b95e7;overflow:hidden"><div class="t" style="left:11.6px;top:2px;font-size:8px;color:#e8ecff">card_1_gr</div></div>
<div class="a" style="left:258.3px;top:309.35px;width:941.7px;height:5.25px;background:#fff"></div>
<div class="a" style="left:257.8px;top:60px;width:.8px;height:254.6px;background:#dcdfe3"></div>
<svg class="a" style="left:0;top:0;pointer-events:none" width="1200" height="316" viewBox="0 0 1200 316"><path d="M264.71 70.6 V73.6 M271.27 60.5 V73.6 M277.83 70.6 V73.6 M284.40 70.6 V73.6 M290.96 70.6 V73.6 M297.53 70.6 V73.6 M304.09 70.6 V73.6 M310.65 70.6 V73.6 M317.22 70.6 V73.6 M323.78 70.6 V73.6 M330.35 70.6 V73.6 M336.91 60.5 V73.6 M343.47 70.6 V73.6 M350.04 70.6 V73.6 M356.60 70.6 V73.6 M363.17 70.6 V73.6 M369.73 70.6 V73.6 M376.29 70.6 V73.6 M382.86 70.6 V73.6 M389.42 70.6 V73.6 M395.99 70.6 V73.6 M402.55 60.5 V73.6 M409.11 70.6 V73.6 M415.68 70.6 V73.6 M422.24 70.6 V73.6 M428.81 70.6 V73.6 M435.37 70.6 V73.6 M441.93 70.6 V73.6 M448.50 70.6 V73.6 M455.06 70.6 V73.6 M461.63 70.6 V73.6 M468.19 60.5 V73.6 M474.75 70.6 V73.6 M481.32 70.6 V73.6 M487.88 70.6 V73.6 M494.45 70.6 V73.6 M501.01 70.6 V73.6 M507.57 70.6 V73.6 M514.14 70.6 V73.6 M520.70 70.6 V73.6 M527.27 70.6 V73.6 M533.83 60.5 V73.6 M540.39 70.6 V73.6 M546.96 70.6 V73.6 M553.52 70.6 V73.6 M560.09 70.6 V73.6 M566.65 70.6 V73.6 M573.21 70.6 V73.6 M579.78 70.6 V73.6 M586.34 70.6 V73.6 M592.91 70.6 V73.6 M599.47 60.5 V73.6 M606.03 70.6 V73.6 M612.60 70.6 V73.6 M619.16 70.6 V73.6 M625.73 70.6 V73.6 M632.29 70.6 V73.6 M638.85 70.6 V73.6 M645.42 70.6 V73.6 M651.98 70.6 V73.6 M658.55 70.6 V73.6 M665.11 60.5 V73.6 M671.67 70.6 V73.6 M678.24 70.6 V73.6 M684.80 70.6 V73.6 M691.37 70.6 V73.6 M697.93 70.6 V73.6 M704.49 70.6 V73.6 M711.06 70.6 V73.6 M717.62 70.6 V73.6 M724.19 70.6 V73.6 M730.75 60.5 V73.6 M737.31 70.6 V73.6 M743.88 70.6 V73.6 M750.44 70.6 V73.6 M757.01 70.6 V73.6 M763.57 70.6 V73.6 M770.13 70.6 V73.6 M776.70 70.6 V73.6 M783.26 70.6 V73.6 M789.83 70.6 V73.6 M796.39 60.5 V73.6 M802.95 70.6 V73.6 M809.52 70.6 V73.6 M816.08 70.6 V73.6 M822.65 70.6 V73.6 M829.21 70.6 V73.6 M835.77 70.6 V73.6 M842.34 70.6 V73.6 M848.90 70.6 V73.6 M855.47 70.6 V73.6 M862.03 60.5 V73.6 M868.59 70.6 V73.6 M875.16 70.6 V73.6 M881.72 70.6 V73.6 M888.29 70.6 V73.6 M894.85 70.6 V73.6 M901.41 70.6 V73.6 M907.98 70.6 V73.6 M914.54 70.6 V73.6 M921.11 70.6 V73.6 M927.67 60.5 V73.6 M934.23 70.6 V73.6 M940.80 70.6 V73.6 M947.36 70.6 V73.6 M953.93 70.6 V73.6 M960.49 70.6 V73.6 M967.05 70.6 V73.6 M973.62 70.6 V73.6 M980.18 70.6 V73.6 M986.75 70.6 V73.6 M993.31 60.5 V73.6 M999.87 70.6 V73.6 M1006.44 70.6 V73.6 M1013.00 70.6 V73.6 M1019.57 70.6 V73.6 M1026.13 70.6 V73.6 M1032.69 70.6 V73.6 M1039.26 70.6 V73.6 M1045.82 70.6 V73.6 M1052.39 70.6 V73.6 M1058.95 60.5 V73.6 M1065.51 70.6 V73.6 M1072.08 70.6 V73.6 M1078.64 70.6 V73.6 M1085.21 70.6 V73.6 M1091.77 70.6 V73.6 M1098.33 70.6 V73.6 M1104.90 70.6 V73.6 M1111.46 70.6 V73.6 M1118.03 70.6 V73.6 M1124.59 60.5 V73.6 M1131.15 70.6 V73.6 M1137.72 70.6 V73.6 M1144.28 70.6 V73.6 M1150.85 70.6 V73.6 M1157.41 70.6 V73.6 M1163.97 70.6 V73.6 M1170.54 70.6 V73.6 M1177.10 70.6 V73.6 M1183.67 70.6 V73.6 M1190.23 60.5 V73.6 M1196.79 70.6 V73.6 M1203.36 70.6 V73.6" stroke="#bfc4ca" stroke-width=".7"/><g transform="translate(252.8 80.10)"><circle r="1.75" fill="#fff" stroke="#f01818" stroke-width="1.5"/><path d="M0 -3.3 V-1.6 M0 3.3 V1.6 M-3.3 0 H-1.6 M3.3 0 H1.6" stroke="#f01818" stroke-width="1.5"/></g><path d="M279.48 80.10 H525.62" stroke="#1a80f6" stroke-width="2"/><path d="M279.48 76.40 l3.7 3.7 l-3.7 3.7 l-3.7 -3.7 Z" fill="#1a80f6"/><g transform="translate(252.8 93.20)"><circle r="1.75" fill="#fff" stroke="#f01818" stroke-width="1.5"/><path d="M0 -3.3 V-1.6 M0 3.3 V1.6 M-3.3 0 H-1.6 M3.3 0 H1.6" stroke="#f01818" stroke-width="1.5"/></g><path d="M279.48 93.20 H525.62" stroke="#1a80f6" stroke-width="2"/><path d="M279.48 89.50 l3.7 3.7 l-3.7 3.7 l-3.7 -3.7 Z" fill="#1a80f6"/><path d="M402.55 89.60 l3.6 3.6 l-3.6 3.6 l-3.6 -3.6 Z" fill="#1a80f6"/><g transform="translate(252.8 106.30)"><circle r="1.75" fill="#fff" stroke="#f01818" stroke-width="1.5"/><path d="M0 -3.3 V-1.6 M0 3.3 V1.6 M-3.3 0 H-1.6 M3.3 0 H1.6" stroke="#f01818" stroke-width="1.5"/></g><path d="M279.48 106.30 H525.62" stroke="#1a80f6" stroke-width="2"/><path d="M279.48 102.60 l3.7 3.7 l-3.7 3.7 l-3.7 -3.7 Z" fill="#1a80f6"/><g transform="translate(252.8 119.40)"><circle r="1.75" fill="#fff" stroke="#f01818" stroke-width="1.5"/><path d="M0 -3.3 V-1.6 M0 3.3 V1.6 M-3.3 0 H-1.6 M3.3 0 H1.6" stroke="#f01818" stroke-width="1.5"/></g><path d="M279.48 119.40 H525.62" stroke="#1a80f6" stroke-width="2"/><path d="M279.48 115.70 l3.7 3.7 l-3.7 3.7 l-3.7 -3.7 Z" fill="#1a80f6"/><g transform="translate(252.8 132.50)"><circle r="1.75" fill="#fff" stroke="#f01818" stroke-width="1.5"/><path d="M0 -3.3 V-1.6 M0 3.3 V1.6 M-3.3 0 H-1.6 M3.3 0 H1.6" stroke="#f01818" stroke-width="1.5"/></g><path d="M279.48 132.50 H525.62" stroke="#1a80f6" stroke-width="2"/><path d="M279.48 128.80 l3.7 3.7 l-3.7 3.7 l-3.7 -3.7 Z" fill="#1a80f6"/><path d="M402.55 128.90 l3.6 3.6 l-3.6 3.6 l-3.6 -3.6 Z" fill="#1a80f6"/><g transform="translate(252.8 145.60)"><circle r="1.75" fill="#fff" stroke="#f01818" stroke-width="1.5"/><path d="M0 -3.3 V-1.6 M0 3.3 V1.6 M-3.3 0 H-1.6 M3.3 0 H1.6" stroke="#f01818" stroke-width="1.5"/></g><path d="M279.48 145.60 H525.62" stroke="#1a80f6" stroke-width="2"/><path d="M279.48 141.90 l3.7 3.7 l-3.7 3.7 l-3.7 -3.7 Z" fill="#1a80f6"/><path d="M402.55 142.00 l3.6 3.6 l-3.6 3.6 l-3.6 -3.6 Z" fill="#1a80f6"/><g transform="translate(252.8 158.70)"><circle r="1.75" fill="#fff" stroke="#f01818" stroke-width="1.5"/><path d="M0 -3.3 V-1.6 M0 3.3 V1.6 M-3.3 0 H-1.6 M3.3 0 H1.6" stroke="#f01818" stroke-width="1.5"/></g><path d="M279.48 158.70 H525.62" stroke="#1a80f6" stroke-width="2"/><path d="M279.48 155.00 l3.7 3.7 l-3.7 3.7 l-3.7 -3.7 Z" fill="#1a80f6"/><path d="M402.55 155.10 l3.6 3.6 l-3.6 3.6 l-3.6 -3.6 Z" fill="#1a80f6"/><g transform="translate(252.8 171.80)"><circle r="1.75" fill="#fff" stroke="#f01818" stroke-width="1.5"/><path d="M0 -3.3 V-1.6 M0 3.3 V1.6 M-3.3 0 H-1.6 M3.3 0 H1.6" stroke="#f01818" stroke-width="1.5"/></g><path d="M279.48 171.80 H525.62" stroke="#1a80f6" stroke-width="2"/><path d="M279.48 168.10 l3.7 3.7 l-3.7 3.7 l-3.7 -3.7 Z" fill="#1a80f6"/><path d="M402.55 168.20 l3.6 3.6 l-3.6 3.6 l-3.6 -3.6 Z" fill="#1a80f6"/><g transform="translate(252.8 184.90)"><circle r="1.75" fill="#fff" stroke="#f01818" stroke-width="1.5"/><path d="M0 -3.3 V-1.6 M0 3.3 V1.6 M-3.3 0 H-1.6 M3.3 0 H1.6" stroke="#f01818" stroke-width="1.5"/></g><path d="M279.48 184.90 H525.62" stroke="#1a80f6" stroke-width="2"/><path d="M279.48 181.20 l3.7 3.7 l-3.7 3.7 l-3.7 -3.7 Z" fill="#1a80f6"/><path d="M402.55 181.30 l3.6 3.6 l-3.6 3.6 l-3.6 -3.6 Z" fill="#1a80f6"/><g transform="translate(252.8 198.00)"><circle r="1.75" fill="#fff" stroke="#f01818" stroke-width="1.5"/><path d="M0 -3.3 V-1.6 M0 3.3 V1.6 M-3.3 0 H-1.6 M3.3 0 H1.6" stroke="#f01818" stroke-width="1.5"/></g><path d="M279.48 198.00 H525.62" stroke="#1a80f6" stroke-width="2"/><path d="M279.48 194.30 l3.7 3.7 l-3.7 3.7 l-3.7 -3.7 Z" fill="#1a80f6"/><path d="M402.55 194.40 l3.6 3.6 l-3.6 3.6 l-3.6 -3.6 Z" fill="#1a80f6"/><g transform="translate(252.8 211.10)"><circle r="1.75" fill="#fff" stroke="#f01818" stroke-width="1.5"/><path d="M0 -3.3 V-1.6 M0 3.3 V1.6 M-3.3 0 H-1.6 M3.3 0 H1.6" stroke="#f01818" stroke-width="1.5"/></g><path d="M279.48 211.10 H525.62" stroke="#1a80f6" stroke-width="2"/><path d="M279.48 207.40 l3.7 3.7 l-3.7 3.7 l-3.7 -3.7 Z" fill="#1a80f6"/><path d="M402.55 207.50 l3.6 3.6 l-3.6 3.6 l-3.6 -3.6 Z" fill="#1a80f6"/><g transform="translate(252.8 224.20)"><circle r="1.75" fill="#fff" stroke="#f01818" stroke-width="1.5"/><path d="M0 -3.3 V-1.6 M0 3.3 V1.6 M-3.3 0 H-1.6 M3.3 0 H1.6" stroke="#f01818" stroke-width="1.5"/></g><path d="M279.48 224.20 H525.62" stroke="#1a80f6" stroke-width="2"/><path d="M279.48 220.50 l3.7 3.7 l-3.7 3.7 l-3.7 -3.7 Z" fill="#1a80f6"/><path d="M402.55 220.60 l3.6 3.6 l-3.6 3.6 l-3.6 -3.6 Z" fill="#1a80f6"/><g transform="translate(252.8 237.30)"><circle r="1.75" fill="#fff" stroke="#f01818" stroke-width="1.5"/><path d="M0 -3.3 V-1.6 M0 3.3 V1.6 M-3.3 0 H-1.6 M3.3 0 H1.6" stroke="#f01818" stroke-width="1.5"/></g><path d="M279.48 237.30 H525.62" stroke="#1a80f6" stroke-width="2"/><path d="M279.48 233.60 l3.7 3.7 l-3.7 3.7 l-3.7 -3.7 Z" fill="#1a80f6"/><path d="M402.55 233.70 l3.6 3.6 l-3.6 3.6 l-3.6 -3.6 Z" fill="#1a80f6"/><g transform="translate(252.8 250.40)"><circle r="1.75" fill="#fff" stroke="#f01818" stroke-width="1.5"/><path d="M0 -3.3 V-1.6 M0 3.3 V1.6 M-3.3 0 H-1.6 M3.3 0 H1.6" stroke="#f01818" stroke-width="1.5"/></g><path d="M279.48 250.40 H525.62" stroke="#1a80f6" stroke-width="2"/><path d="M279.48 246.70 l3.7 3.7 l-3.7 3.7 l-3.7 -3.7 Z" fill="#1a80f6"/><path d="M402.55 246.80 l3.6 3.6 l-3.6 3.6 l-3.6 -3.6 Z" fill="#1a80f6"/><g transform="translate(252.8 263.50)"><circle r="1.75" fill="#fff" stroke="#f01818" stroke-width="1.5"/><path d="M0 -3.3 V-1.6 M0 3.3 V1.6 M-3.3 0 H-1.6 M3.3 0 H1.6" stroke="#f01818" stroke-width="1.5"/></g><path d="M279.48 263.50 H525.62" stroke="#1a80f6" stroke-width="2"/><path d="M279.48 259.80 l3.7 3.7 l-3.7 3.7 l-3.7 -3.7 Z" fill="#1a80f6"/><path d="M402.55 259.90 l3.6 3.6 l-3.6 3.6 l-3.6 -3.6 Z" fill="#1a80f6"/><g transform="translate(252.8 276.60)"><circle r="1.75" fill="#fff" stroke="#f01818" stroke-width="1.5"/><path d="M0 -3.3 V-1.6 M0 3.3 V1.6 M-3.3 0 H-1.6 M3.3 0 H1.6" stroke="#f01818" stroke-width="1.5"/></g><path d="M279.48 276.60 H525.62" stroke="#1a80f6" stroke-width="2"/><path d="M279.48 272.90 l3.7 3.7 l-3.7 3.7 l-3.7 -3.7 Z" fill="#1a80f6"/><path d="M402.55 273.00 l3.6 3.6 l-3.6 3.6 l-3.6 -3.6 Z" fill="#1a80f6"/><g transform="translate(252.8 289.70)"><circle r="1.75" fill="#fff" stroke="#f01818" stroke-width="1.5"/><path d="M0 -3.3 V-1.6 M0 3.3 V1.6 M-3.3 0 H-1.6 M3.3 0 H1.6" stroke="#f01818" stroke-width="1.5"/></g><path d="M279.48 289.70 H525.62" stroke="#1a80f6" stroke-width="2"/><path d="M279.48 286.00 l3.7 3.7 l-3.7 3.7 l-3.7 -3.7 Z" fill="#1a80f6"/><path d="M402.55 286.10 l3.6 3.6 l-3.6 3.6 l-3.6 -3.6 Z" fill="#1a80f6"/><g transform="translate(252.8 302.80)"><circle r="1.75" fill="#fff" stroke="#f01818" stroke-width="1.5"/><path d="M0 -3.3 V-1.6 M0 3.3 V1.6 M-3.3 0 H-1.6 M3.3 0 H1.6" stroke="#f01818" stroke-width="1.5"/></g><path d="M279.48 302.80 H525.62" stroke="#1a80f6" stroke-width="2"/><path d="M279.48 299.10 l3.7 3.7 l-3.7 3.7 l-3.7 -3.7 Z" fill="#1a80f6"/><path d="M402.55 299.20 l3.6 3.6 l-3.6 3.6 l-3.6 -3.6 Z" fill="#1a80f6"/><path d="M525.92 72 V314.6" stroke="#7a7a7a" stroke-width=".9"/><rect x="524.32" y="60.9" width="3.2" height="12.2" fill="#555"/><path d="M525.92 76.50 l3.6 3.6 l-3.6 3.6 l-3.6 -3.6 Z" fill="#1f7fe8" stroke="#0a1224" stroke-width="1.25"/><path d="M525.92 89.60 l3.6 3.6 l-3.6 3.6 l-3.6 -3.6 Z" fill="#1f7fe8" stroke="#0a1224" stroke-width="1.25"/><path d="M525.92 102.70 l3.6 3.6 l-3.6 3.6 l-3.6 -3.6 Z" fill="#1f7fe8" stroke="#0a1224" stroke-width="1.25"/><path d="M525.92 115.80 l3.6 3.6 l-3.6 3.6 l-3.6 -3.6 Z" fill="#1f7fe8" stroke="#0a1224" stroke-width="1.25"/><path d="M525.92 128.90 l3.6 3.6 l-3.6 3.6 l-3.6 -3.6 Z" fill="#1f7fe8" stroke="#0a1224" stroke-width="1.25"/><path d="M525.92 142.00 l3.6 3.6 l-3.6 3.6 l-3.6 -3.6 Z" fill="#1f7fe8" stroke="#0a1224" stroke-width="1.25"/><path d="M525.92 155.10 l3.6 3.6 l-3.6 3.6 l-3.6 -3.6 Z" fill="#1f7fe8" stroke="#0a1224" stroke-width="1.25"/><path d="M525.92 168.20 l3.6 3.6 l-3.6 3.6 l-3.6 -3.6 Z" fill="#1f7fe8" stroke="#0a1224" stroke-width="1.25"/><path d="M525.92 181.30 l3.6 3.6 l-3.6 3.6 l-3.6 -3.6 Z" fill="#1f7fe8" stroke="#0a1224" stroke-width="1.25"/><path d="M525.92 194.40 l3.6 3.6 l-3.6 3.6 l-3.6 -3.6 Z" fill="#1f7fe8" stroke="#0a1224" stroke-width="1.25"/><path d="M525.92 207.50 l3.6 3.6 l-3.6 3.6 l-3.6 -3.6 Z" fill="#1f7fe8" stroke="#0a1224" stroke-width="1.25"/><path d="M525.92 220.60 l3.6 3.6 l-3.6 3.6 l-3.6 -3.6 Z" fill="#1f7fe8" stroke="#0a1224" stroke-width="1.25"/><path d="M525.92 233.70 l3.6 3.6 l-3.6 3.6 l-3.6 -3.6 Z" fill="#1f7fe8" stroke="#0a1224" stroke-width="1.25"/><path d="M525.92 246.80 l3.6 3.6 l-3.6 3.6 l-3.6 -3.6 Z" fill="#1f7fe8" stroke="#0a1224" stroke-width="1.25"/><path d="M525.92 259.90 l3.6 3.6 l-3.6 3.6 l-3.6 -3.6 Z" fill="#1f7fe8" stroke="#0a1224" stroke-width="1.25"/><path d="M525.92 273.00 l3.6 3.6 l-3.6 3.6 l-3.6 -3.6 Z" fill="#1f7fe8" stroke="#0a1224" stroke-width="1.25"/><path d="M525.92 286.10 l3.6 3.6 l-3.6 3.6 l-3.6 -3.6 Z" fill="#1f7fe8" stroke="#0a1224" stroke-width="1.25"/><path d="M525.92 299.20 l3.6 3.6 l-3.6 3.6 l-3.6 -3.6 Z" fill="#1f7fe8" stroke="#0a1224" stroke-width="1.25"/></svg>
<div class="t" style="left:273.07px;top:61.6px;font-size:7.5px;color:#1a1a1a;-webkit-text-stroke:.1px #1a1a1a">-200</div>
<div class="t" style="left:338.71px;top:61.6px;font-size:7.5px;color:#1a1a1a;-webkit-text-stroke:.1px #1a1a1a">-100</div>
<div class="t" style="left:404.35px;top:61.6px;font-size:7.5px;color:#1a1a1a;-webkit-text-stroke:.1px #1a1a1a">0</div>
<div class="t" style="left:469.99px;top:61.6px;font-size:7.5px;color:#1a1a1a;-webkit-text-stroke:.1px #1a1a1a">100</div>
<div class="t" style="left:535.63px;top:61.6px;font-size:7.5px;color:#1a1a1a;-webkit-text-stroke:.1px #1a1a1a">200</div>
<div class="t" style="left:601.27px;top:61.6px;font-size:7.5px;color:#1a1a1a;-webkit-text-stroke:.1px #1a1a1a">300</div>
<div class="t" style="left:666.91px;top:61.6px;font-size:7.5px;color:#1a1a1a;-webkit-text-stroke:.1px #1a1a1a">400</div>
<div class="t" style="left:732.55px;top:61.6px;font-size:7.5px;color:#1a1a1a;-webkit-text-stroke:.1px #1a1a1a">500</div>
<div class="t" style="left:798.19px;top:61.6px;font-size:7.5px;color:#1a1a1a;-webkit-text-stroke:.1px #1a1a1a">600</div>
<div class="t" style="left:863.83px;top:61.6px;font-size:7.5px;color:#1a1a1a;-webkit-text-stroke:.1px #1a1a1a">700</div>
<div class="t" style="left:929.47px;top:61.6px;font-size:7.5px;color:#1a1a1a;-webkit-text-stroke:.1px #1a1a1a">800</div>
<div class="t" style="left:995.11px;top:61.6px;font-size:7.5px;color:#1a1a1a;-webkit-text-stroke:.1px #1a1a1a">900</div>
<div class="t" style="left:1060.75px;top:61.6px;font-size:7.5px;color:#1a1a1a;-webkit-text-stroke:.1px #1a1a1a">1000</div>
<div class="t" style="left:1126.39px;top:61.6px;font-size:7.5px;color:#1a1a1a;-webkit-text-stroke:.1px #1a1a1a">1100</div>
<div class="t" style="left:1192.03px;top:61.6px;font-size:7.5px;color:#1a1a1a;-webkit-text-stroke:.1px #1a1a1a">1200</div>
<div class="a" style="left:127px;top:314.6px;width:1073px;height:235.4px;background:#f1f1f1;border-top:1px solid #f9f9f9"></div>
<div class="a" style="left:133px;top:343px;width:111.6px;height:197.4px;background:#86abd4"></div>
<div class="a" style="left:134px;top:344.6px;width:110px;height:195px;background:#86abd4"></div>
<div class="t" style="left:136.2px;top:346.90000000000003px;font-size:3.4px;color:rgba(255,255,255,.85);letter-spacing:-.1px">●●●○○ Sketch</div>
<div class="t c" style="left:189px;top:348.5px;font-size:3.4px;color:rgba(255,255,255,.9);font-weight:bold">9:41 AM</div>
<div class="t" style="left:223.5px;top:346.90000000000003px;font-size:3.4px;color:rgba(255,255,255,.85)">☾ 42%</div>
<div class="a" style="left:235.6px;top:346.90000000000003px;width:5.6px;height:2.9px;border:.5px solid rgba(255,255,255,.9);border-radius:.6px"><div style="width:2.6px;height:1.9px;background:#fff"></div></div>
<svg class="a" style="left:178px;top:357.0px" width="22" height="12"><use href="#rlogo"/></svg>
<div class="a" style="left:142.7px;top:377px;width:93px;height:140px;background:#fff;border-radius:4.5px;box-shadow:0 2px 6px rgba(0,0,0,.13)"></div>
<div class="t c" style="left:189.2px;top:391.4px;font-size:6px;color:#4d4d4d;letter-spacing:-.12px">COCONUT</div>
<div class="t c" style="left:189.2px;top:400.8px;font-size:5.2px;color:#bdbdbd">$2.99</div>
<div class="a" style="left:151.6px;top:411px;width:75px;height:61px;box-shadow:0 3px 5px rgba(0,0,0,.22)"><svg width="75" height="61" style="display:block"><use href="#coco"/></svg></div>
<div class="a" style="left:165.89999999999998px;top:483.6px;width:47px;height:14px;border:1px solid #8fb3da;border-radius:7px"></div>
<div class="t c" style="left:189.2px;top:491.5px;font-size:4.75px;color:#7fa6d0;-webkit-text-stroke:.15px #7fa6d0">BUY NOW</div>
<div class="t c" style="left:189.2px;top:503.7px;font-size:3.8px;color:#c0c0c0">3.5 OZ. BAR</div>
<div class="a" style="left:184.8px;top:526.6px;width:3.4px;height:3.4px;border-radius:50%;background:#fff"></div>
<div class="a" style="left:191.2px;top:527.5px;width:1.7px;height:1.7px;border-radius:50%;background:rgba(255,255,255,.5)"></div>
<div class="a" style="left:252px;top:377px;width:93px;height:140px;background:#fff;border-radius:4.5px;box-shadow:0 2px 6px rgba(0,0,0,.13)"></div>
<div class="t c" style="left:298.5px;top:391.4px;font-size:6px;color:#4d4d4d;letter-spacing:-.05px">COCOA MOUSSE</div>
<div class="t c" style="left:298.5px;top:400.8px;font-size:5.2px;color:#bdbdbd">$2.99</div>
<div class="a" style="left:260.9px;top:411px;width:75px;height:61px;box-shadow:0 3px 5px rgba(0,0,0,.22)"><svg width="75" height="61" style="display:block"><use href="#cocoa"/></svg></div>
<div class="a" style="left:275.2px;top:483.6px;width:47px;height:14px;border:1px solid #a67966;border-radius:7px"></div>
<div class="t c" style="left:298.5px;top:491.5px;font-size:4.75px;color:#9a6a56;-webkit-text-stroke:.15px #9a6a56">BUY NOW</div>
<div class="t c" style="left:298.5px;top:503.7px;font-size:3.8px;color:#c0c0c0">3.5 OZ. BAR</div>
<div class="a" style="left:383px;top:377px;width:93px;height:140px;background:#fff;border-radius:4.5px;box-shadow:0 2px 6px rgba(0,0,0,.13)"></div>
<div class="t c" style="left:414.0px;top:391.4px;font-size:6px;color:#4d4d4d;letter-spacing:-.12px">COCONUT</div>
<div class="t c" style="left:414.0px;top:400.8px;font-size:5.2px;color:#bdbdbd">$2.99</div>
<div class="a" style="left:376.4px;top:411px;width:75px;height:61px;box-shadow:0 3px 5px rgba(0,0,0,.22)"><svg width="75" height="61" style="display:block"><use href="#coco"/></svg></div>
<div class="a" style="left:390.7px;top:483.6px;width:47px;height:14px;border:1px solid #8fb3da;border-radius:7px"></div>
<div class="t c" style="left:414.0px;top:491.5px;font-size:4.75px;color:#7fa6d0;-webkit-text-stroke:.15px #7fa6d0">BUY NOW</div>
<div class="t c" style="left:414.0px;top:503.7px;font-size:3.8px;color:#c0c0c0">3.5 OZ. BAR</div>
<div class="a" style="left:484px;top:344.6px;width:110px;height:195px;background:#9a6853"></div>
<div class="t" style="left:486.2px;top:346.90000000000003px;font-size:3.4px;color:rgba(255,255,255,.85);letter-spacing:-.1px">●●●○○ Sketch</div>
<div class="t c" style="left:539px;top:348.5px;font-size:3.4px;color:rgba(255,255,255,.9);font-weight:bold">9:41 AM</div>
<div class="t" style="left:573.5px;top:346.90000000000003px;font-size:3.4px;color:rgba(255,255,255,.85)">☾ 42%</div>
<div class="a" style="left:585.6px;top:346.90000000000003px;width:5.6px;height:2.9px;border:.5px solid rgba(255,255,255,.9);border-radius:.6px"><div style="width:2.6px;height:1.9px;background:#fff"></div></div>
<svg class="a" style="left:528px;top:357.0px" width="22" height="12"><use href="#rlogo"/></svg>
<div class="a" style="left:492.7px;top:377px;width:93px;height:140px;background:#fff;border-radius:4.5px;box-shadow:0 2px 6px rgba(0,0,0,.13)"></div>
<div class="t c" style="left:539.2px;top:391.4px;font-size:6px;color:#4d4d4d;letter-spacing:-.05px">COCOA MOUSSE</div>
<div class="t c" style="left:539.2px;top:400.8px;font-size:5.2px;color:#bdbdbd">$2.99</div>
<div class="a" style="left:501.59999999999997px;top:411px;width:75px;height:61px;box-shadow:0 3px 5px rgba(0,0,0,.22)"><svg width="75" height="61" style="display:block"><use href="#cocoa"/></svg></div>
<div class="a" style="left:515.9px;top:483.6px;width:47px;height:14px;border:1px solid #a67966;border-radius:7px"></div>
<div class="t c" style="left:539.2px;top:491.5px;font-size:4.75px;color:#9a6a56;-webkit-text-stroke:.15px #9a6a56">BUY NOW</div>
<div class="t c" style="left:539.2px;top:503.7px;font-size:3.8px;color:#c0c0c0">3.5 OZ. BAR</div>
<div class="a" style="left:535.6px;top:527.5px;width:1.7px;height:1.7px;border-radius:50%;background:rgba(255,255,255,.5)"></div>
<div class="a" style="left:540.4px;top:526.6px;width:3.4px;height:3.4px;border-radius:50%;background:#fff"></div>
<div class="a" style="left:608.4px;top:344.6px;width:110px;height:205.39999999999998px;background:#fff;overflow:hidden"></div>
<div class="a" style="left:608.4px;top:344.6px;width:110px;height:29.3px;background:#9a6853"></div>
<div class="t" style="left:610.6px;top:346.90000000000003px;font-size:3.4px;color:rgba(255,255,255,.85);letter-spacing:-.1px">●●●○○ Sketch</div>
<div class="t c" style="left:663.4px;top:348.5px;font-size:3.4px;color:rgba(255,255,255,.9);font-weight:bold">9:41 AM</div>
<div class="t" style="left:697.9px;top:346.90000000000003px;font-size:3.4px;color:rgba(255,255,255,.85)">☾ 42%</div>
<div class="a" style="left:710.0px;top:346.90000000000003px;width:5.6px;height:2.9px;border:.5px solid rgba(255,255,255,.9);border-radius:.6px"><div style="width:2.6px;height:1.9px;background:#fff"></div></div>
<div class="a" style="left:637.1999999999999px;top:363.1px;width:53px;height:43px;box-shadow:0 2px 5px rgba(0,0,0,.28)"><svg width="53" height="43" viewBox="0 0 75 61" preserveAspectRatio="none" style="display:block"><use href="#cocoa" width="75" height="61"/></svg></div>
<div class="t c" style="left:663.0px;top:419.4px;font-size:6px;color:#4d4d4d;letter-spacing:-.05px">COCOA MOUSSE</div>
<div class="t c" style="left:663.0px;top:428.4px;font-size:5.2px;color:#bdbdbd">$2.99</div>
<div class="t c" style="left:663.0px;top:441.7px;font-size:4.5px;color:#b9b9b9">If you can't believe your eyes when you see</div>
<div class="t c" style="left:663.0px;top:449.3px;font-size:4.5px;color:#b9b9b9">the extra large pieces of our Cocoa Mousse</div>
<div class="t c" style="left:663.0px;top:456.9px;font-size:4.5px;color:#b9b9b9">bar, you'll just have to trust in your taste.</div>
<div class="a" style="left:616.1999999999999px;top:466.8px;width:93.4px;height:84px;border:.7px solid #f0f0f0"></div>
<div class="a" style="left:619.4px;top:482.8px;width:87px;height:.6px;background:#ededed"></div>
<div class="a" style="left:619.4px;top:498.7px;width:87px;height:.6px;background:#ededed"></div>
<div class="a" style="left:619.4px;top:515px;width:87px;height:.6px;background:#ededed"></div>
<div class="t l" style="left:622.6999999999999px;top:475.3px;font-size:4.4px;color:#9a9a9a">Energy</div>
<div class="t r" style="left:704.6px;top:475.3px;font-size:4.4px;color:#b5b5b5">2404kJ (577kcal)</div>
<div class="t l" style="left:622.6999999999999px;top:491.3px;font-size:4.4px;color:#9a9a9a">Fat</div>
<div class="t r" style="left:704.6px;top:491.3px;font-size:4.4px;color:#b5b5b5">39g</div>
<div class="t l" style="left:622.6999999999999px;top:507.5px;font-size:4.4px;color:#9a9a9a">Carbohydrates</div>
<div class="t r" style="left:704.6px;top:507.5px;font-size:4.4px;color:#b5b5b5">46g</div>
<div class="t l" style="left:622.6999999999999px;top:522.8px;font-size:4.4px;color:#e2e2e2">Protein</div>
<div class="t r" style="left:704.6px;top:522.8px;font-size:4.4px;color:#e2e2e2">7.7g</div>
<div class="a" style="left:608.4px;top:505px;width:110px;height:45px;background:linear-gradient(rgba(255,255,255,0),rgba(255,255,255,.9) 45%,#fff 70%)"></div>
<div class="a" style="left:640.0px;top:518.3px;width:46.7px;height:13.6px;border:1px solid #a67966;border-radius:7px;background:#fff"></div>
<div class="t c" style="left:663.4px;top:525.9px;font-size:4.75px;color:#9a6a56;-webkit-text-stroke:.15px #9a6a56">BUY NOW</div>
<div class="a" style="left:732.4px;top:344.6px;width:110px;height:195px;background:#9a6853"></div>
<div class="t" style="left:734.6px;top:346.90000000000003px;font-size:3.4px;color:rgba(255,255,255,.85);letter-spacing:-.1px">●●●○○ Sketch</div>
<div class="t c" style="left:787.4px;top:348.5px;font-size:3.4px;color:rgba(255,255,255,.9);font-weight:bold">9:41 AM</div>
<div class="t" style="left:821.9px;top:346.90000000000003px;font-size:3.4px;color:rgba(255,255,255,.85)">☾ 42%</div>
<div class="a" style="left:834.0px;top:346.90000000000003px;width:5.6px;height:2.9px;border:.5px solid rgba(255,255,255,.9);border-radius:.6px"><div style="width:2.6px;height:1.9px;background:#fff"></div></div>
<svg class="a" style="left:776.4px;top:357.0px" width="22" height="12"><use href="#rlogo"/></svg>
<div class="a" style="left:741.1px;top:377px;width:93px;height:140px;background:#fff;border-radius:4.5px;box-shadow:0 2px 6px rgba(0,0,0,.13)"></div>
<div class="t c" style="left:787.6px;top:391.4px;font-size:6px;color:#4d4d4d;letter-spacing:-.05px">COCOA MOUSSE</div>
<div class="t c" style="left:787.6px;top:400.8px;font-size:5.2px;color:#bdbdbd">$2.99</div>
<div class="a" style="left:750.0px;top:411px;width:75px;height:61px;box-shadow:0 3px 5px rgba(0,0,0,.22)"><svg width="75" height="61" style="display:block"><use href="#cocoa"/></svg></div>
<div class="a" style="left:764.3000000000001px;top:483.6px;width:47px;height:14px;border:1px solid #a67966;border-radius:7px"></div>
<div class="t c" style="left:787.6px;top:491.5px;font-size:4.75px;color:#9a6a56;-webkit-text-stroke:.15px #9a6a56">BUY NOW</div>
<div class="t c" style="left:787.6px;top:503.7px;font-size:3.8px;color:#c0c0c0">3.5 OZ. BAR</div>
<div class="a" style="left:784.0px;top:527.5px;width:1.7px;height:1.7px;border-radius:50%;background:rgba(255,255,255,.5)"></div>
<div class="a" style="left:788.8px;top:526.6px;width:3.4px;height:3.4px;border-radius:50%;background:#fff"></div>
<div class="a" style="left:850px;top:377px;width:93px;height:140px;background:#fff;border-radius:4.5px;box-shadow:0 2px 6px rgba(0,0,0,.13)"></div>
<div class="t c" style="left:896.5px;top:391.4px;font-size:6px;color:#4d4d4d;letter-spacing:-.12px">COCONUT</div>
<div class="t c" style="left:896.5px;top:400.8px;font-size:5.2px;color:#bdbdbd">$2.99</div>
<div class="a" style="left:858.9px;top:411px;width:75px;height:61px;box-shadow:0 3px 5px rgba(0,0,0,.22)"><svg width="75" height="61" style="display:block"><use href="#coco"/></svg></div>
<div class="a" style="left:873.2px;top:483.6px;width:47px;height:14px;border:1px solid #8fb3da;border-radius:7px"></div>
<div class="t c" style="left:896.5px;top:491.5px;font-size:4.75px;color:#7fa6d0;-webkit-text-stroke:.15px #7fa6d0">BUY NOW</div>
<div class="t c" style="left:896.5px;top:503.7px;font-size:3.8px;color:#c0c0c0">3.5 OZ. BAR</div>
<div class="a" style="left:981.2px;top:377px;width:93px;height:140px;background:#fff;border-radius:4.5px;box-shadow:0 2px 6px rgba(0,0,0,.13)"></div>
<div class="t c" style="left:1012.2px;top:391.4px;font-size:6px;color:#4d4d4d;letter-spacing:-.05px">COCOA MOUSSE</div>
<div class="t c" style="left:1012.2px;top:400.8px;font-size:5.2px;color:#bdbdbd">$2.99</div>
<div class="a" style="left:974.6px;top:411px;width:75px;height:61px;box-shadow:0 3px 5px rgba(0,0,0,.22)"><svg width="75" height="61" style="display:block"><use href="#cocoa"/></svg></div>
<div class="a" style="left:988.9000000000001px;top:483.6px;width:47px;height:14px;border:1px solid #a67966;border-radius:7px"></div>
<div class="t c" style="left:1012.2px;top:491.5px;font-size:4.75px;color:#9a6a56;-webkit-text-stroke:.15px #9a6a56">BUY NOW</div>
<div class="t c" style="left:1012.2px;top:503.7px;font-size:3.8px;color:#c0c0c0">3.5 OZ. BAR</div>
<div class="a" style="left:1082.5px;top:344.6px;width:110px;height:195px;background:#86abd4"></div>
<div class="t" style="left:1084.7px;top:346.90000000000003px;font-size:3.4px;color:rgba(255,255,255,.85);letter-spacing:-.1px">●●●○○ Sketch</div>
<div class="t c" style="left:1137.5px;top:348.5px;font-size:3.4px;color:rgba(255,255,255,.9);font-weight:bold">9:41 AM</div>
<div class="t" style="left:1172.0px;top:346.90000000000003px;font-size:3.4px;color:rgba(255,255,255,.85)">☾ 42%</div>
<div class="a" style="left:1184.1px;top:346.90000000000003px;width:5.6px;height:2.9px;border:.5px solid rgba(255,255,255,.9);border-radius:.6px"><div style="width:2.6px;height:1.9px;background:#fff"></div></div>
<svg class="a" style="left:1126.5px;top:357.0px" width="22" height="12"><use href="#rlogo"/></svg>
<div class="a" style="left:1091.2px;top:377px;width:93px;height:140px;background:#fff;border-radius:4.5px;box-shadow:0 2px 6px rgba(0,0,0,.13)"></div>
<div class="t c" style="left:1137.7px;top:391.4px;font-size:6px;color:#4d4d4d;letter-spacing:-.12px">COCONUT</div>
<div class="t c" style="left:1137.7px;top:400.8px;font-size:5.2px;color:#bdbdbd">$2.99</div>
<div class="a" style="left:1100.1000000000001px;top:411px;width:75px;height:61px;box-shadow:0 3px 5px rgba(0,0,0,.22)"><svg width="75" height="61" style="display:block"><use href="#coco"/></svg></div>
<div class="a" style="left:1114.4px;top:483.6px;width:47px;height:14px;border:1px solid #8fb3da;border-radius:7px"></div>
<div class="t c" style="left:1137.7px;top:491.5px;font-size:4.75px;color:#7fa6d0;-webkit-text-stroke:.15px #7fa6d0">BUY NOW</div>
<div class="t c" style="left:1137.7px;top:503.7px;font-size:3.8px;color:#c0c0c0">3.5 OZ. BAR</div>
<div class="a" style="left:1133.3px;top:526.6px;width:3.4px;height:3.4px;border-radius:50%;background:#fff"></div>
<div class="a" style="left:1139.7px;top:527.5px;width:1.7px;height:1.7px;border-radius:50%;background:rgba(255,255,255,.5)"></div>
<div class="a" style="left:130.5px;top:340.4px;width:117px;height:202.6px;border:3px solid #0be30b;border-radius:2.5px"></div>
<div class="a" style="left:132.0px;top:342.29999999999995px;width:4.2px;height:4.2px;background:#fff;border:.9px solid #222;border-radius:.6px"></div>
<div class="a" style="left:132.0px;top:439.9px;width:4.2px;height:4.2px;background:#fff;border:.9px solid #222;border-radius:.6px"></div>
<div class="a" style="left:132.0px;top:537.6999999999999px;width:4.2px;height:4.2px;background:#fff;border:.9px solid #222;border-radius:.6px"></div>
<div class="a" style="left:187.1px;top:342.29999999999995px;width:4.2px;height:4.2px;background:#fff;border:.9px solid #222;border-radius:.6px"></div>
<div class="a" style="left:187.1px;top:537.6999999999999px;width:4.2px;height:4.2px;background:#fff;border:.9px solid #222;border-radius:.6px"></div>
<div class="a" style="left:242.20000000000002px;top:342.29999999999995px;width:4.2px;height:4.2px;background:#fff;border:.9px solid #222;border-radius:.6px"></div>
<div class="a" style="left:242.20000000000002px;top:439.9px;width:4.2px;height:4.2px;background:#fff;border:.9px solid #222;border-radius:.6px"></div>
<div class="a" style="left:242.20000000000002px;top:537.6999999999999px;width:4.2px;height:4.2px;background:#fff;border:.9px solid #222;border-radius:.6px"></div>
<div class="a" style="left:248.4px;top:437.2px;width:9.4px;height:9.4px;border-radius:50%;background:#fff;border:.8px solid #333"></div>
<svg class="a" style="left:250.6px;top:439px" width="5" height="6" viewBox="0 0 5 6"><path d="M3.2 .2 L.8 3.3 H2.4 L1.8 5.8 L4.3 2.5 H2.7 Z" fill="#111"/></svg>
<div class="t l" style="left:192.8px;top:326px;font-size:8px;color:#1c1c1c;-webkit-text-stroke:.1px #1c1c1c">card_1_gr Drag Ends</div>
<svg class="a" style="left:0;top:326px" width="1200" height="12" viewBox="0 326 1200 12"><path d="M192.8 331.7 H536.2" stroke="#10e010" stroke-width="1.7"/><path d="M531.7 328.4 L536.6 331.7 L531.7 335" fill="none" stroke="#10e010" stroke-width="1.7" stroke-linejoin="miter"/></svg>
<div class="t l" style="left:543.5px;top:326px;font-size:8px;color:#858585;-webkit-text-stroke:.1px #858585">bar_2_gr Tap</div>
<svg class="a" style="left:0;top:326px" width="1200" height="12" viewBox="0 326 1200 12"><path d="M543.5 331.7 H660" stroke="#a2a2a2" stroke-width="1.3"/><path d="M655.5 328.4 L660.4 331.7 L655.5 335" fill="none" stroke="#a2a2a2" stroke-width="1.3" stroke-linejoin="miter"/></svg>
<div class="t l" style="left:667px;top:326px;font-size:8px;color:#858585;-webkit-text-stroke:.1px #858585">card_2_gr Drag Ends</div>
<svg class="a" style="left:0;top:326px" width="1200" height="12" viewBox="0 326 1200 12"><path d="M667 331.7 H784" stroke="#a2a2a2" stroke-width="1.3"/><path d="M779.5 328.4 L784.4 331.7 L779.5 335" fill="none" stroke="#a2a2a2" stroke-width="1.3" stroke-linejoin="miter"/></svg>
<div class="t l" style="left:791.3px;top:326px;font-size:8px;color:#858585;-webkit-text-stroke:.1px #858585">card_2_gr Drag Ends</div>
<svg class="a" style="left:0;top:326px" width="1200" height="12" viewBox="0 326 1200 12"><path d="M791.3 331.7 H1134" stroke="#a2a2a2" stroke-width="1.3"/><path d="M1129.5 328.4 L1134.4 331.7 L1129.5 335" fill="none" stroke="#a2a2a2" stroke-width="1.3" stroke-linejoin="miter"/></svg>
<div class="a" style="left:127px;top:550px;width:1073px;height:222px;background:#fff"></div>
<div class="a" style="left:258.3px;top:560.00px;width:941.7px;height:13.85px;background:#f5f5f5"></div>
<div class="a" style="left:127px;top:560.00px;width:131.3px;height:13.85px;background:#f6f6f6"></div>
<div class="t l dn" style="left:129.2px;top:567.17px;color:#1c1c1c;-webkit-text-stroke-color:#1c1c1c">button_1</div>
<div class="t r dn" style="left:245.9px;top:567.17px;color:#1c1c1c;-webkit-text-stroke-color:#1c1c1c">X</div>
<div class="a" style="left:258.3px;top:573.75px;width:941.7px;height:13.85px;background:#ffffff"></div>
<div class="a" style="left:127px;top:573.75px;width:131.3px;height:13.85px;background:#f6f6f6"></div>
<div class="t l dn" style="left:129.2px;top:580.92px;color:#1c1c1c;-webkit-text-stroke-color:#1c1c1c">3.5ozbar_1</div>
<div class="t r dn" style="left:245.9px;top:580.92px;color:#1c1c1c;-webkit-text-stroke-color:#1c1c1c">X</div>
<div class="a" style="left:258.3px;top:587.50px;width:941.7px;height:13.85px;background:#f5f5f5"></div>
<div class="a" style="left:127px;top:587.50px;width:131.3px;height:13.85px;background:#f6f6f6"></div>
<div class="t l dn" style="left:129.2px;top:594.67px;color:#1c1c1c;-webkit-text-stroke-color:#1c1c1c">selected</div>
<div class="t r dn" style="left:245.9px;top:594.67px;color:#1c1c1c;-webkit-text-stroke-color:#1c1c1c">X</div>
<div class="a" style="left:258.3px;top:601.25px;width:941.7px;height:13.85px;background:#ffffff"></div>
<div class="a" style="left:127px;top:601.25px;width:131.3px;height:13.85px;background:#f6f6f6"></div>
<div class="t r dn" style="left:245.9px;top:608.42px;color:#1c1c1c;-webkit-text-stroke-color:#1c1c1c">Y</div>
<div class="a" style="left:258.3px;top:615.00px;width:941.7px;height:13.85px;background:#f5f5f5"></div>
<div class="a" style="left:127px;top:615.00px;width:131.3px;height:13.85px;background:#f6f6f6"></div>
<div class="t r dn" style="left:245.9px;top:622.17px;color:#1c1c1c;-webkit-text-stroke-color:#1c1c1c">Width</div>
<div class="a" style="left:258.3px;top:628.75px;width:941.7px;height:13.85px;background:#ffffff"></div>
<div class="a" style="left:127px;top:628.75px;width:131.3px;height:13.85px;background:#f6f6f6"></div>
<div class="t r dn" style="left:245.9px;top:635.92px;color:#1c1c1c;-webkit-text-stroke-color:#1c1c1c">Height</div>
<div class="a" style="left:258.3px;top:642.50px;width:941.7px;height:13.85px;background:#f5f5f5"></div>
<div class="a" style="left:127px;top:642.50px;width:131.3px;height:13.85px;background:#f6f6f6"></div>
<div class="t l dn" style="left:129.2px;top:649.67px;color:#1c1c1c;-webkit-text-stroke-color:#1c1c1c">card_1_bg</div>
<div class="t r dn" style="left:245.9px;top:649.67px;color:#1c1c1c;-webkit-text-stroke-color:#1c1c1c">X</div>
<div class="a" style="left:258.3px;top:656.25px;width:941.7px;height:13.85px;background:#ffffff"></div>
<div class="a" style="left:127px;top:656.25px;width:131.3px;height:13.85px;background:#7b95e7"></div>
<div class="t l dn" style="left:129.2px;top:663.42px;color:#e9edff;-webkit-text-stroke-color:#e9edff">card_1_gr</div>
<div class="t r dn" style="left:245.9px;top:663.42px;color:#e9edff;-webkit-text-stroke-color:#e9edff">X</div>
<div class="a" style="left:258.3px;top:670.00px;width:941.7px;height:13.85px;background:#f5f5f5"></div>
<div class="a" style="left:127px;top:670.00px;width:131.3px;height:13.85px;background:#f6f6f6"></div>
<div class="t l dn" style="left:129.2px;top:677.17px;color:#1c1c1c;-webkit-text-stroke-color:#1c1c1c">bar_2_gr</div>
<div class="t r dn" style="left:245.9px;top:677.17px;color:#1c1c1c;-webkit-text-stroke-color:#1c1c1c">X</div>
<div class="a" style="left:258.3px;top:683.75px;width:941.7px;height:13.85px;background:#ffffff"></div>
<div class="a" style="left:127px;top:683.75px;width:131.3px;height:13.85px;background:#f6f6f6"></div>
<div class="t l dn" style="left:129.2px;top:690.92px;color:#1c1c1c;-webkit-text-stroke-color:#1c1c1c">price_bar_2</div>
<div class="t r dn" style="left:245.9px;top:690.92px;color:#1c1c1c;-webkit-text-stroke-color:#1c1c1c">X</div>
<div class="a" style="left:258.3px;top:697.50px;width:941.7px;height:13.85px;background:#f5f5f5"></div>
<div class="a" style="left:127px;top:697.50px;width:131.3px;height:13.85px;background:#f6f6f6"></div>
<div class="t l dn" style="left:129.2px;top:704.67px;color:#1c1c1c;-webkit-text-stroke-color:#1c1c1c">name_bar_2</div>
<div class="t r dn" style="left:245.9px;top:704.67px;color:#1c1c1c;-webkit-text-stroke-color:#1c1c1c">X</div>
<div class="a" style="left:258.3px;top:711.25px;width:941.7px;height:13.85px;background:#ffffff"></div>
<div class="a" style="left:127px;top:711.25px;width:131.3px;height:13.85px;background:#f6f6f6"></div>
<div class="t l dn" style="left:129.2px;top:718.42px;color:#1c1c1c;-webkit-text-stroke-color:#1c1c1c">button_2</div>
<div class="t r dn" style="left:245.9px;top:718.42px;color:#1c1c1c;-webkit-text-stroke-color:#1c1c1c">X</div>
<div class="a" style="left:258.3px;top:725.00px;width:941.7px;height:13.85px;background:#f5f5f5"></div>
<div class="a" style="left:127px;top:725.00px;width:131.3px;height:13.85px;background:#f6f6f6"></div>
<div class="t l dn" style="left:129.2px;top:732.17px;color:#1c1c1c;-webkit-text-stroke-color:#1c1c1c">3.5ozbar_2</div>
<div class="t r dn" style="left:245.9px;top:732.17px;color:#1c1c1c;-webkit-text-stroke-color:#1c1c1c">X</div>
<div class="a" style="left:258.3px;top:738.75px;width:941.7px;height:13.85px;background:#ffffff"></div>
<div class="a" style="left:127px;top:738.75px;width:131.3px;height:13.85px;background:#f6f6f6"></div>
<div class="t l dn" style="left:129.2px;top:745.92px;color:#1c1c1c;-webkit-text-stroke-color:#1c1c1c">card_2_over</div>
<div class="t r dn" style="left:245.9px;top:745.92px;color:#1c1c1c;-webkit-text-stroke-color:#1c1c1c">Opacity</div>
<div class="a" style="left:258.3px;top:752.50px;width:941.7px;height:13.85px;background:#f5f5f5"></div>
<div class="a" style="left:127px;top:752.50px;width:131.3px;height:13.85px;background:#f6f6f6"></div>
<div class="t r dn" style="left:245.9px;top:759.67px;color:#1c1c1c;-webkit-text-stroke-color:#1c1c1c">Fill</div>
<div class="a" style="left:258.3px;top:766.25px;width:941.7px;height:13.85px;background:#ffffff"></div>
<div class="a" style="left:127px;top:766.25px;width:131.3px;height:13.85px;background:#f6f6f6"></div>
<div class="t l dn" style="left:129.2px;top:773.42px;color:#1c1c1c;-webkit-text-stroke-color:#1c1c1c">card_2_gr</div>
<div class="t r dn" style="left:245.9px;top:773.42px;color:#1c1c1c;-webkit-text-stroke-color:#1c1c1c">X</div>
<svg class="a" style="left:0;top:550px;pointer-events:none" width="1200" height="222" viewBox="0 550 1200 222"><g transform="translate(252.5 566.88)" stroke="#b9b9b9" stroke-width=".6" fill="none"><path d="M0 -3.1 V3.1 M-2.7 -1.55 L2.7 1.55 M-2.7 1.55 L2.7 -1.55"/><path d="M-.9 -2.5 L0 -1.7 L.9 -2.5 M-.9 2.5 L0 1.7 L.9 2.5"/></g><path d="M261.60 566.88 L265.20 563.27 H344.30 L347.90 566.88 L344.30 570.48 H265.20 Z" fill="#1473e6"/><path d="M340.70 566.88 l3.6 -3.6 l3.6 3.6 l-3.6 3.6 Z" fill="#0b3f93"/><path d="M261.60 566.88 l3.6 -3.6 l3.6 3.6 l-3.6 3.6 Z" fill="#0b3f93"/><g transform="translate(252.5 580.62)" stroke="#b9b9b9" stroke-width=".6" fill="none"><path d="M0 -3.1 V3.1 M-2.7 -1.55 L2.7 1.55 M-2.7 1.55 L2.7 -1.55"/><path d="M-.9 -2.5 L0 -1.7 L.9 -2.5 M-.9 2.5 L0 1.7 L.9 2.5"/></g><path d="M261.60 580.62 L265.20 577.02 H344.30 L347.90 580.62 L344.30 584.23 H265.20 Z" fill="#1473e6"/><path d="M340.70 580.62 l3.6 -3.6 l3.6 3.6 l-3.6 3.6 Z" fill="#0b3f93"/><path d="M261.60 580.62 l3.6 -3.6 l3.6 3.6 l-3.6 3.6 Z" fill="#0b3f93"/><g transform="translate(252.5 594.38)" stroke="#b9b9b9" stroke-width=".6" fill="none"><path d="M0 -3.1 V3.1 M-2.7 -1.55 L2.7 1.55 M-2.7 1.55 L2.7 -1.55"/><path d="M-.9 -2.5 L0 -1.7 L.9 -2.5 M-.9 2.5 L0 1.7 L.9 2.5"/></g><linearGradient id="sg2" gradientUnits="userSpaceOnUse" x1="343.30" x2="349.30" y1="0" y2="0"><stop offset="0" stop-color="#1473e6"/><stop offset="1" stop-color="#1473e6" stop-opacity="0"/></linearGradient><path d="M261.60 594.38 L265.20 590.77 H349.30 V597.98 H265.20 Z" fill="url(#sg2)"/><path d="M261.60 594.38 l3.6 -3.6 l3.6 3.6 l-3.6 3.6 Z" fill="#0b3f93"/><g transform="translate(252.5 608.12)" stroke="#b9b9b9" stroke-width=".6" fill="none"><path d="M0 -3.1 V3.1 M-2.7 -1.55 L2.7 1.55 M-2.7 1.55 L2.7 -1.55"/><path d="M-.9 -2.5 L0 -1.7 L.9 -2.5 M-.9 2.5 L0 1.7 L.9 2.5"/></g><linearGradient id="sg3" gradientUnits="userSpaceOnUse" x1="343.30" x2="349.30" y1="0" y2="0"><stop offset="0" stop-color="#1473e6"/><stop offset="1" stop-color="#1473e6" stop-opacity="0"/></linearGradient><path d="M261.60 608.12 L265.20 604.52 H349.30 V611.73 H265.20 Z" fill="url(#sg3)"/><path d="M261.60 608.12 l3.6 -3.6 l3.6 3.6 l-3.6 3.6 Z" fill="#0b3f93"/><g transform="translate(252.5 621.88)" stroke="#b9b9b9" stroke-width=".6" fill="none"><path d="M0 -3.1 V3.1 M-2.7 -1.55 L2.7 1.55 M-2.7 1.55 L2.7 -1.55"/><path d="M-.9 -2.5 L0 -1.7 L.9 -2.5 M-.9 2.5 L0 1.7 L.9 2.5"/></g><linearGradient id="sg4" gradientUnits="userSpaceOnUse" x1="343.30" x2="349.30" y1="0" y2="0"><stop offset="0" stop-color="#1473e6"/><stop offset="1" stop-color="#1473e6" stop-opacity="0"/></linearGradient><path d="M261.60 621.88 L265.20 618.27 H349.30 V625.48 H265.20 Z" fill="url(#sg4)"/><path d="M261.60 621.88 l3.6 -3.6 l3.6 3.6 l-3.6 3.6 Z" fill="#0b3f93"/><g transform="translate(252.5 635.62)" stroke="#b9b9b9" stroke-width=".6" fill="none"><path d="M0 -3.1 V3.1 M-2.7 -1.55 L2.7 1.55 M-2.7 1.55 L2.7 -1.55"/><path d="M-.9 -2.5 L0 -1.7 L.9 -2.5 M-.9 2.5 L0 1.7 L.9 2.5"/></g><linearGradient id="sg5" gradientUnits="userSpaceOnUse" x1="343.30" x2="349.30" y1="0" y2="0"><stop offset="0" stop-color="#1473e6"/><stop offset="1" stop-color="#1473e6" stop-opacity="0"/></linearGradient><path d="M261.60 635.62 L265.20 632.02 H349.30 V639.23 H265.20 Z" fill="url(#sg5)"/><path d="M261.60 635.62 l3.6 -3.6 l3.6 3.6 l-3.6 3.6 Z" fill="#0b3f93"/><g transform="translate(252.5 649.38)" stroke="#b9b9b9" stroke-width=".6" fill="none"><path d="M0 -3.1 V3.1 M-2.7 -1.55 L2.7 1.55 M-2.7 1.55 L2.7 -1.55"/><path d="M-.9 -2.5 L0 -1.7 L.9 -2.5 M-.9 2.5 L0 1.7 L.9 2.5"/></g><path d="M261.60 649.38 L265.20 645.77 H344.30 L347.90 649.38 L344.30 652.98 H265.20 Z" fill="#1473e6"/><path d="M340.70 649.38 l3.6 -3.6 l3.6 3.6 l-3.6 3.6 Z" fill="#0b3f93"/><path d="M261.60 649.38 l3.6 -3.6 l3.6 3.6 l-3.6 3.6 Z" fill="#0b3f93"/><g transform="translate(252.5 663.12)" stroke="#aab6e6" stroke-width=".6" fill="none"><path d="M0 -3.1 V3.1 M-2.7 -1.55 L2.7 1.55 M-2.7 1.55 L2.7 -1.55"/><path d="M-.9 -2.5 L0 -1.7 L.9 -2.5 M-.9 2.5 L0 1.7 L.9 2.5"/></g><path d="M261.60 663.12 L265.20 659.52 H344.30 L347.90 663.12 L344.30 666.73 H265.20 Z" fill="#1473e6"/><path d="M340.70 663.12 l3.6 -3.6 l3.6 3.6 l-3.6 3.6 Z" fill="#0b3f93"/><path d="M261.60 663.12 l3.6 -3.6 l3.6 3.6 l-3.6 3.6 Z" fill="#0b3f93"/><g transform="translate(252.5 676.88)" stroke="#b9b9b9" stroke-width=".6" fill="none"><path d="M0 -3.1 V3.1 M-2.7 -1.55 L2.7 1.55 M-2.7 1.55 L2.7 -1.55"/><path d="M-.9 -2.5 L0 -1.7 L.9 -2.5 M-.9 2.5 L0 1.7 L.9 2.5"/></g><linearGradient id="sg8" gradientUnits="userSpaceOnUse" x1="353.60" x2="359.60" y1="0" y2="0"><stop offset="0" stop-color="#1473e6"/><stop offset="1" stop-color="#1473e6" stop-opacity="0"/></linearGradient><path d="M272.30 676.88 L275.90 673.27 H359.60 V680.48 H275.90 Z" fill="url(#sg8)"/><path d="M272.30 676.88 l3.6 -3.6 l3.6 3.6 l-3.6 3.6 Z" fill="#0b3f93"/><g transform="translate(252.5 690.62)" stroke="#b9b9b9" stroke-width=".6" fill="none"><path d="M0 -3.1 V3.1 M-2.7 -1.55 L2.7 1.55 M-2.7 1.55 L2.7 -1.55"/><path d="M-.9 -2.5 L0 -1.7 L.9 -2.5 M-.9 2.5 L0 1.7 L.9 2.5"/></g><linearGradient id="sg9" gradientUnits="userSpaceOnUse" x1="345.80" x2="351.80" y1="0" y2="0"><stop offset="0" stop-color="#1473e6"/><stop offset="1" stop-color="#1473e6" stop-opacity="0"/></linearGradient><path d="M264.20 690.62 L267.80 687.02 H351.80 V694.23 H267.80 Z" fill="url(#sg9)"/><path d="M264.20 690.62 l3.6 -3.6 l3.6 3.6 l-3.6 3.6 Z" fill="#0b3f93"/><g transform="translate(252.5 704.38)" stroke="#b9b9b9" stroke-width=".6" fill="none"><path d="M0 -3.1 V3.1 M-2.7 -1.55 L2.7 1.55 M-2.7 1.55 L2.7 -1.55"/><path d="M-.9 -2.5 L0 -1.7 L.9 -2.5 M-.9 2.5 L0 1.7 L.9 2.5"/></g><linearGradient id="sg10" gradientUnits="userSpaceOnUse" x1="348.40" x2="354.40" y1="0" y2="0"><stop offset="0" stop-color="#1473e6"/><stop offset="1" stop-color="#1473e6" stop-opacity="0"/></linearGradient><path d="M266.80 704.38 L270.40 700.77 H354.40 V707.98 H270.40 Z" fill="url(#sg10)"/><path d="M266.80 704.38 l3.6 -3.6 l3.6 3.6 l-3.6 3.6 Z" fill="#0b3f93"/><g transform="translate(252.5 718.12)" stroke="#b9b9b9" stroke-width=".6" fill="none"><path d="M0 -3.1 V3.1 M-2.7 -1.55 L2.7 1.55 M-2.7 1.55 L2.7 -1.55"/><path d="M-.9 -2.5 L0 -1.7 L.9 -2.5 M-.9 2.5 L0 1.7 L.9 2.5"/></g><linearGradient id="sg11" gradientUnits="userSpaceOnUse" x1="348.40" x2="354.40" y1="0" y2="0"><stop offset="0" stop-color="#1473e6"/><stop offset="1" stop-color="#1473e6" stop-opacity="0"/></linearGradient><path d="M266.80 718.12 L270.40 714.52 H354.40 V721.73 H270.40 Z" fill="url(#sg11)"/><path d="M266.80 718.12 l3.6 -3.6 l3.6 3.6 l-3.6 3.6 Z" fill="#0b3f93"/><g transform="translate(252.5 731.88)" stroke="#b9b9b9" stroke-width=".6" fill="none"><path d="M0 -3.1 V3.1 M-2.7 -1.55 L2.7 1.55 M-2.7 1.55 L2.7 -1.55"/><path d="M-.9 -2.5 L0 -1.7 L.9 -2.5 M-.9 2.5 L0 1.7 L.9 2.5"/></g><linearGradient id="sg12" gradientUnits="userSpaceOnUse" x1="343.30" x2="349.30" y1="0" y2="0"><stop offset="0" stop-color="#1473e6"/><stop offset="1" stop-color="#1473e6" stop-opacity="0"/></linearGradient><path d="M261.60 731.88 L265.20 728.27 H349.30 V735.48 H265.20 Z" fill="url(#sg12)"/><path d="M261.60 731.88 l3.6 -3.6 l3.6 3.6 l-3.6 3.6 Z" fill="#0b3f93"/><g transform="translate(252.5 745.62)" stroke="#b9b9b9" stroke-width=".6" fill="none"><path d="M0 -3.1 V3.1 M-2.7 -1.55 L2.7 1.55 M-2.7 1.55 L2.7 -1.55"/><path d="M-.9 -2.5 L0 -1.7 L.9 -2.5 M-.9 2.5 L0 1.7 L.9 2.5"/></g><path d="M261.60 745.62 L265.20 742.02 H344.30 L347.90 745.62 L344.30 749.23 H265.20 Z" fill="#1473e6"/><path d="M340.70 745.62 l3.6 -3.6 l3.6 3.6 l-3.6 3.6 Z" fill="#0b3f93"/><path d="M261.60 745.62 l3.6 -3.6 l3.6 3.6 l-3.6 3.6 Z" fill="#0b3f93"/><g transform="translate(252.5 759.38)" stroke="#b9b9b9" stroke-width=".6" fill="none"><path d="M0 -3.1 V3.1 M-2.7 -1.55 L2.7 1.55 M-2.7 1.55 L2.7 -1.55"/><path d="M-.9 -2.5 L0 -1.7 L.9 -2.5 M-.9 2.5 L0 1.7 L.9 2.5"/></g><path d="M261.60 759.38 L265.20 755.77 H344.30 L347.90 759.38 L344.30 762.98 H265.20 Z" fill="#1473e6"/><path d="M340.70 759.38 l3.6 -3.6 l3.6 3.6 l-3.6 3.6 Z" fill="#0b3f93"/><path d="M261.60 759.38 l3.6 -3.6 l3.6 3.6 l-3.6 3.6 Z" fill="#0b3f93"/><g transform="translate(252.5 773.12)" stroke="#b9b9b9" stroke-width=".6" fill="none"><path d="M0 -3.1 V3.1 M-2.7 -1.55 L2.7 1.55 M-2.7 1.55 L2.7 -1.55"/><path d="M-.9 -2.5 L0 -1.7 L.9 -2.5 M-.9 2.5 L0 1.7 L.9 2.5"/></g><linearGradient id="sg15" gradientUnits="userSpaceOnUse" x1="343.30" x2="349.30" y1="0" y2="0"><stop offset="0" stop-color="#1473e6"/><stop offset="1" stop-color="#1473e6" stop-opacity="0"/></linearGradient><path d="M261.60 773.12 L265.20 769.52 H349.30 V776.73 H265.20 Z" fill="url(#sg15)"/><path d="M261.60 773.12 l3.6 -3.6 l3.6 3.6 l-3.6 3.6 Z" fill="#0b3f93"/></svg>
<div class="a" style="left:127px;top:573.25px;width:131.3px;height:1px;background:#e4e4e4"></div>
<div class="t c" style="left:304.15px;top:567.08px;font-size:7.8px;color:#f2f7ff">Default <span style="font-size:5.4px;position:relative;top:-.7px;display:inline-block;transform:scaleX(1.25)">▼</span></div>
<div class="a" style="left:127px;top:587.00px;width:131.3px;height:1px;background:#e4e4e4"></div>
<div class="t c" style="left:304.15px;top:580.83px;font-size:7.8px;color:#f2f7ff">Default <span style="font-size:5.4px;position:relative;top:-.7px;display:inline-block;transform:scaleX(1.25)">▼</span></div>
<div class="t c" style="left:304.85px;top:594.58px;font-size:7.8px;color:#f2f7ff">Spring <span style="font-size:5.4px;position:relative;top:-.7px;display:inline-block;transform:scaleX(1.25)">▼</span></div>
<div class="t c" style="left:304.85px;top:608.33px;font-size:7.8px;color:#f2f7ff">Spring <span style="font-size:5.4px;position:relative;top:-.7px;display:inline-block;transform:scaleX(1.25)">▼</span></div>
<div class="t c" style="left:304.85px;top:622.08px;font-size:7.8px;color:#f2f7ff">Spring <span style="font-size:5.4px;position:relative;top:-.7px;display:inline-block;transform:scaleX(1.25)">▼</span></div>
<div class="a" style="left:127px;top:642.00px;width:131.3px;height:1px;background:#e4e4e4"></div>
<div class="t c" style="left:304.85px;top:635.83px;font-size:7.8px;color:#f2f7ff">Spring <span style="font-size:5.4px;position:relative;top:-.7px;display:inline-block;transform:scaleX(1.25)">▼</span></div>
<div class="a" style="left:127px;top:655.75px;width:131.3px;height:1px;background:#e4e4e4"></div>
<div class="t c" style="left:304.15px;top:649.58px;font-size:7.8px;color:#f2f7ff">Default <span style="font-size:5.4px;position:relative;top:-.7px;display:inline-block;transform:scaleX(1.25)">▼</span></div>
<div class="a" style="left:127px;top:669.50px;width:131.3px;height:1px;background:#e4e4e4"></div>
<div class="t c" style="left:304.15px;top:663.33px;font-size:7.8px;color:#f2f7ff">Default <span style="font-size:5.4px;position:relative;top:-.7px;display:inline-block;transform:scaleX(1.25)">▼</span></div>
<div class="a" style="left:127px;top:683.25px;width:131.3px;height:1px;background:#e4e4e4"></div>
<div class="t c" style="left:315.35px;top:677.08px;font-size:7.8px;color:#f2f7ff">Spring <span style="font-size:5.4px;position:relative;top:-.7px;display:inline-block;transform:scaleX(1.25)">▼</span></div>
<div class="a" style="left:127px;top:697.00px;width:131.3px;height:1px;background:#e4e4e4"></div>
<div class="t c" style="left:307.40px;top:690.83px;font-size:7.8px;color:#f2f7ff">Spring <span style="font-size:5.4px;position:relative;top:-.7px;display:inline-block;transform:scaleX(1.25)">▼</span></div>
<div class="a" style="left:127px;top:710.75px;width:131.3px;height:1px;background:#e4e4e4"></div>
<div class="t c" style="left:310.00px;top:704.58px;font-size:7.8px;color:#f2f7ff">Spring <span style="font-size:5.4px;position:relative;top:-.7px;display:inline-block;transform:scaleX(1.25)">▼</span></div>
<div class="a" style="left:127px;top:724.50px;width:131.3px;height:1px;background:#e4e4e4"></div>
<div class="t c" style="left:310.00px;top:718.33px;font-size:7.8px;color:#f2f7ff">Spring <span style="font-size:5.4px;position:relative;top:-.7px;display:inline-block;transform:scaleX(1.25)">▼</span></div>
<div class="a" style="left:127px;top:738.25px;width:131.3px;height:1px;background:#e4e4e4"></div>
<div class="t c" style="left:304.85px;top:732.08px;font-size:7.8px;color:#f2f7ff">Spring <span style="font-size:5.4px;position:relative;top:-.7px;display:inline-block;transform:scaleX(1.25)">▼</span></div>
<div class="t c" style="left:304.15px;top:745.83px;font-size:7.8px;color:#f2f7ff">Default <span style="font-size:5.4px;position:relative;top:-.7px;display:inline-block;transform:scaleX(1.25)">▼</span></div>
<div class="a" style="left:127px;top:765.75px;width:131.3px;height:1px;background:#e4e4e4"></div>
<div class="t c" style="left:304.15px;top:759.58px;font-size:7.8px;color:#f2f7ff">Default <span style="font-size:5.4px;position:relative;top:-.7px;display:inline-block;transform:scaleX(1.25)">▼</span></div>
<div class="t c" style="left:304.85px;top:773.33px;font-size:7.8px;color:#f2f7ff">Spring <span style="font-size:5.4px;position:relative;top:-.7px;display:inline-block;transform:scaleX(1.25)">▼</span></div>
<div class="a" style="left:257.8px;top:550px;width:.8px;height:222px;background:#dcdfe3"></div>
<div class="a" style="left:127px;top:550px;width:1073px;height:15.4px;background:#e7ebf0;border-top:.6px solid #d9dde2"></div>
<div class="a" style="left:258.3px;top:550.5px;width:941.7px;height:14.9px;background:#e9edf1"></div>
<div class="a" style="left:257.8px;top:550px;width:.8px;height:15.4px;background:#d5d9de"></div>
<div class="t c" style="left:192.6px;top:559.3px;font-size:8px;color:#222">Screen_1 to Screen_2</div>
<svg class="a" style="left:0;top:550px" width="1200" height="16" viewBox="0 550 1200 16"><path d="M265.40 550.5 V565.4 M291.64 561.2 V565.4 M317.88 561.2 V565.4 M344.12 561.2 V565.4 M370.36 561.2 V565.4 M396.60 561.2 V565.4 M422.84 561.2 V565.4 M449.08 561.2 V565.4 M475.32 561.2 V565.4 M501.56 561.2 V565.4 M527.80 550.5 V565.4 M554.04 561.2 V565.4 M580.28 561.2 V565.4 M606.52 561.2 V565.4 M632.76 561.2 V565.4 M659.00 561.2 V565.4 M685.24 561.2 V565.4 M711.48 561.2 V565.4 M737.72 561.2 V565.4 M763.96 561.2 V565.4 M790.20 550.5 V565.4 M816.44 561.2 V565.4 M842.68 561.2 V565.4 M868.92 561.2 V565.4 M895.16 561.2 V565.4 M921.40 561.2 V565.4 M947.64 561.2 V565.4 M973.88 561.2 V565.4 M1000.12 561.2 V565.4 M1026.36 561.2 V565.4 M1052.60 550.5 V565.4 M1078.84 561.2 V565.4 M1105.08 561.2 V565.4 M1131.32 561.2 V565.4 M1157.56 561.2 V565.4 M1183.80 561.2 V565.4 M1210.04 561.2 V565.4" stroke="#b4b9bf" stroke-width=".7"/></svg>
<div class="t l" style="left:267.40px;top:556px;font-size:7.5px;color:#222">0s</div>
<div class="t l" style="left:529.80px;top:556px;font-size:7.5px;color:#222">1s</div>
<div class="t l" style="left:792.20px;top:556px;font-size:7.5px;color:#222">2s</div>
<div class="t l" style="left:1054.60px;top:556px;font-size:7.5px;color:#222">3s</div>
</body></html>
